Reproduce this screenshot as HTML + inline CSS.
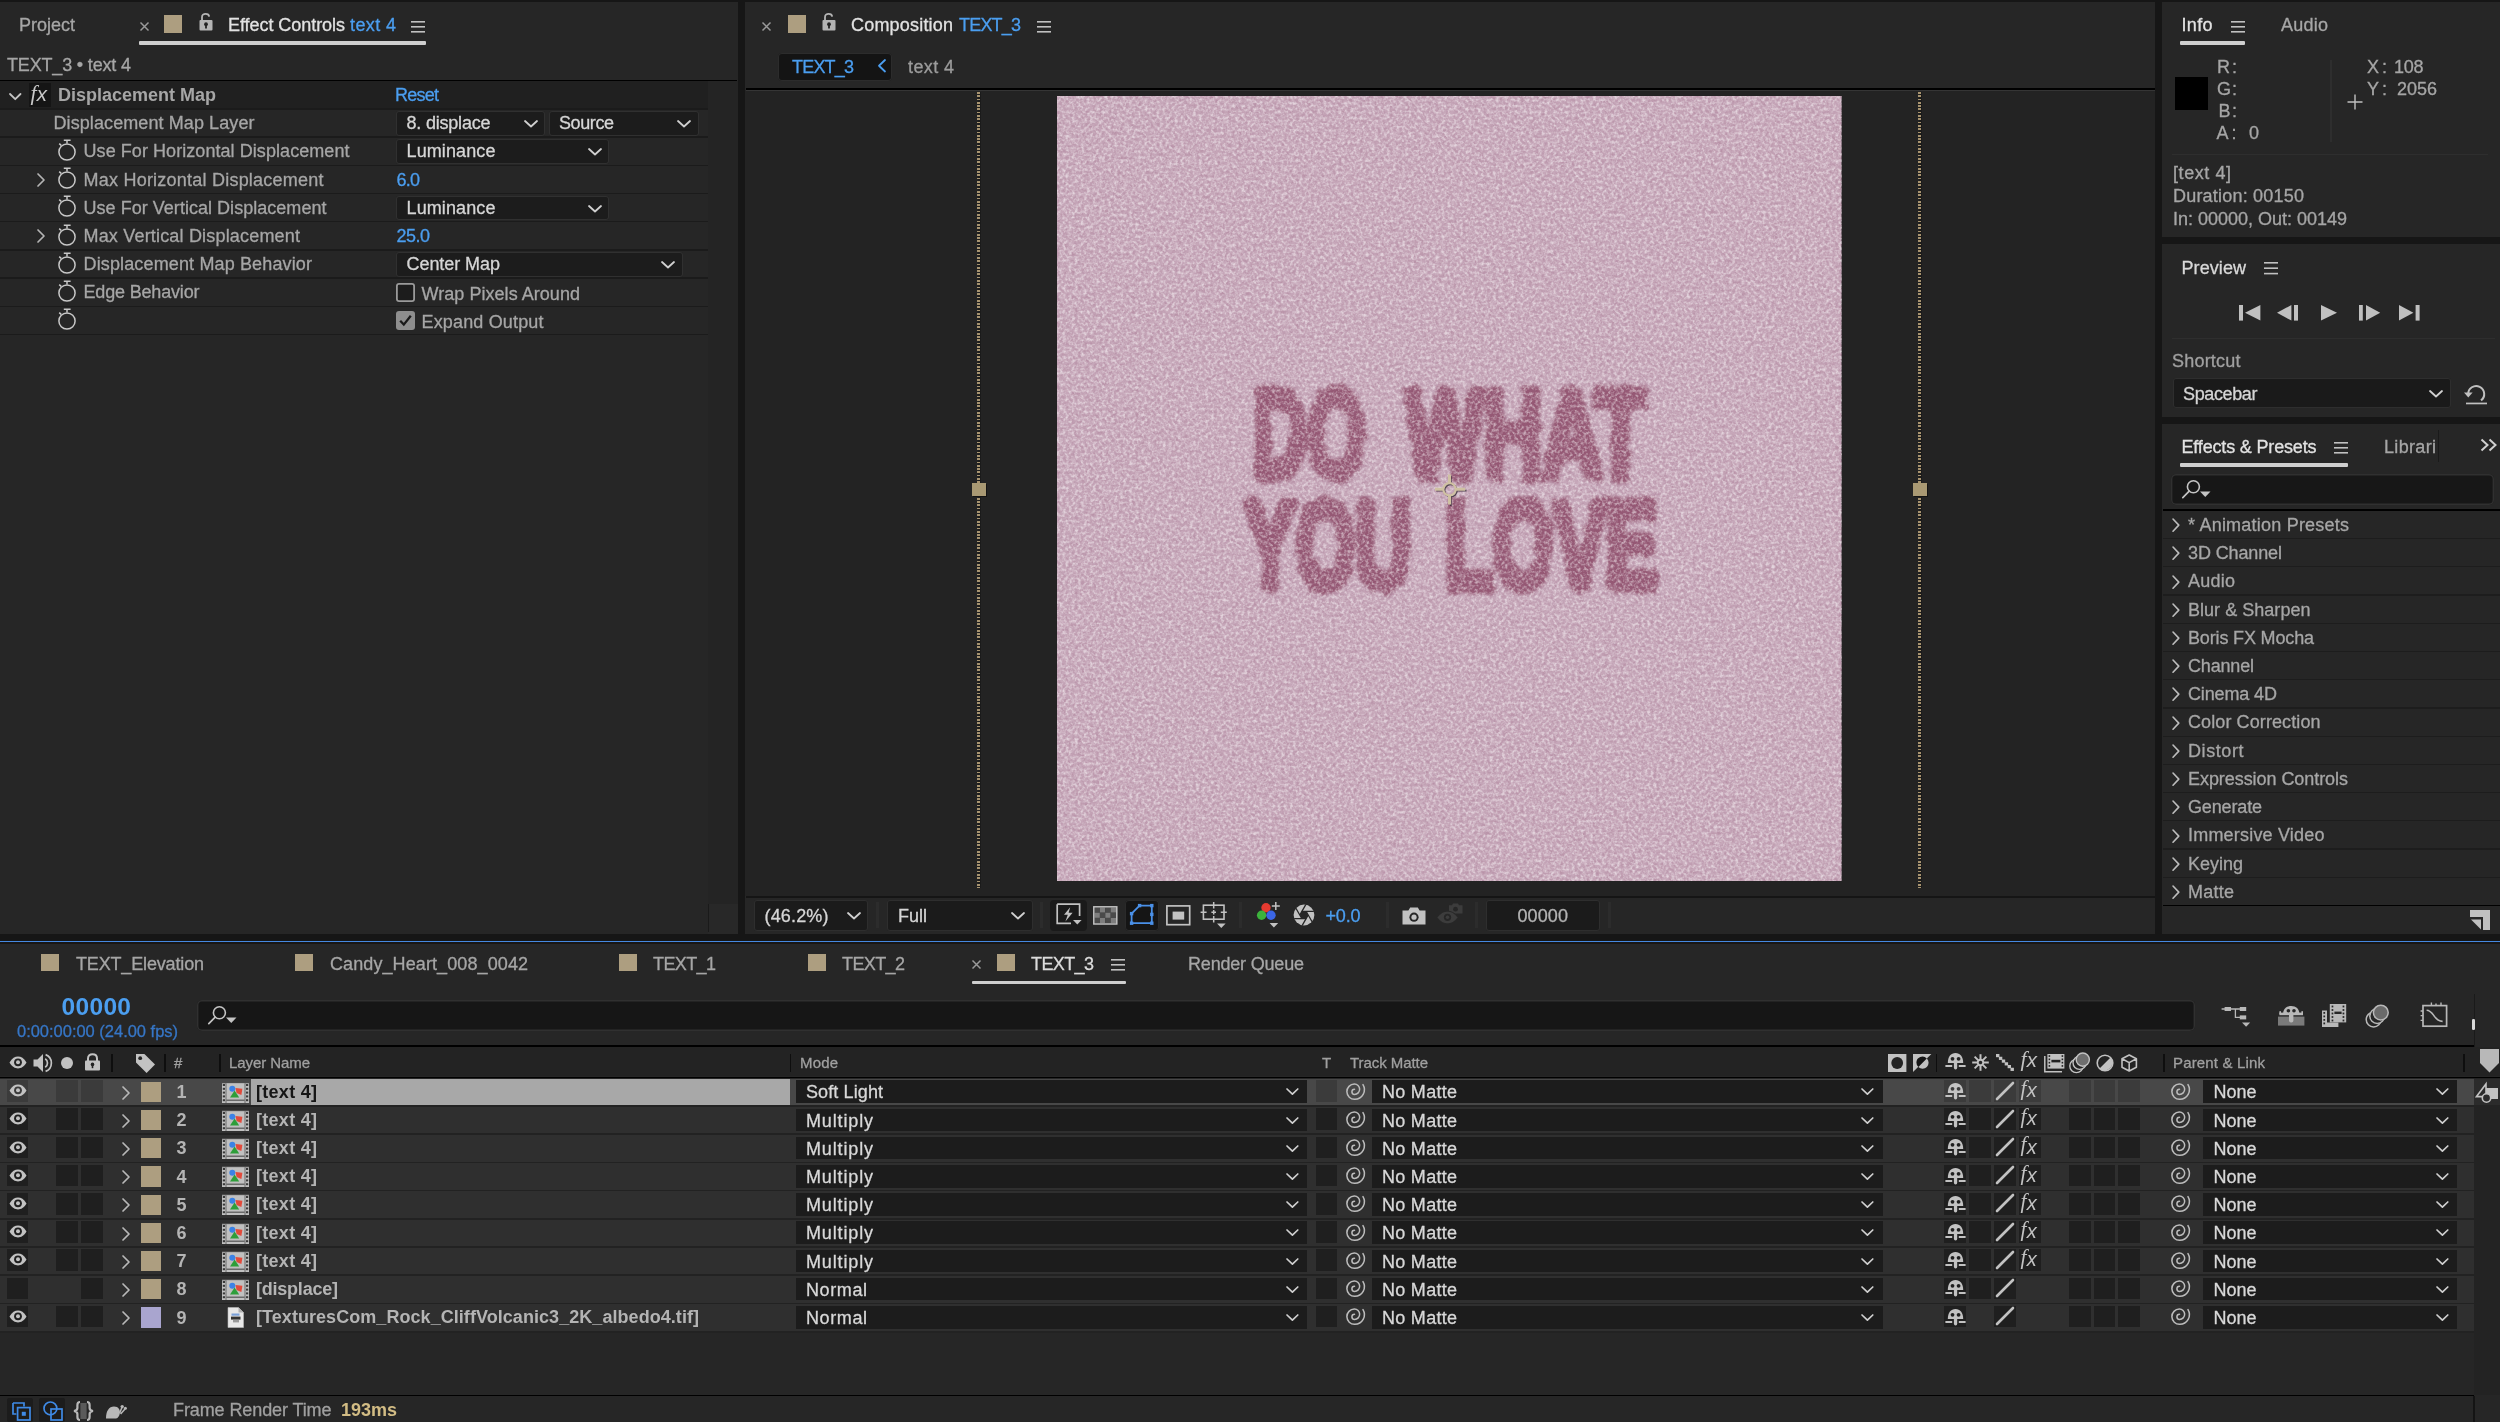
<!DOCTYPE html>
<html><head><meta charset="utf-8"><title>After Effects</title><style>html,body{margin:0;padding:0;background:#161616;}
body{width:2500px;height:1422px;position:relative;overflow:hidden;font-family:"Liberation Sans",sans-serif;}
#r{will-change:transform;position:absolute;left:0;top:0;width:2500px;height:1422px;overflow:hidden;background:#161616;}
#r>div,#r>span,#r>svg{position:absolute;display:block;}
#r>span{white-space:pre;}
svg{overflow:visible;}
</style></head><body><div id="r">
<div style="left:0px;top:1.5px;width:738.2px;height:932.2px;background:#262626;"></div>
<span style="left:19px;top:16.36px;font-size:18px;line-height:18px;color:#a6a6a6;letter-spacing:-0.004px;-webkit-text-stroke:0.3px;">Project</span>
<svg style="left:139.5px;top:21.5px;" width="9" height="9" viewBox="0 0 9 9"><path d="M0.5 0.5L8.5 8.5M8.5 0.5L0.5 8.5" stroke="#9a9a9a" stroke-width="1.5" fill="none"/></svg>
<div style="left:164px;top:15px;width:17.5px;height:17.5px;background:#ad9e80;"></div>
<svg style="left:198.5px;top:12.5px;" width="14" height="18" viewBox="0 0 14 18"><path d="M3 7.5V4.2C3 2 4.6 0.9 6.6 0.9C8.6 0.9 10 2 10.2 3.6" stroke="#b4b4b4" stroke-width="1.8" fill="none"/><rect x="0.5" y="7" width="13" height="10.5" rx="1" fill="#b4b4b4"/><circle cx="7" cy="11.2" r="1.9" fill="#232323"/><rect x="6.1" y="11.5" width="1.8" height="4" fill="#232323"/></svg>
<span style="left:228px;top:16.36px;font-size:18px;line-height:18px;color:#e2e2e2;letter-spacing:-0.052px;-webkit-text-stroke:0.3px;">Effect Controls</span>
<span style="left:350px;top:16.36px;font-size:18px;line-height:18px;color:#4b9ef0;letter-spacing:0.395px;-webkit-text-stroke:0.3px;">text 4</span>
<svg style="left:411px;top:20.5px;" width="14" height="12" viewBox="0 0 14 12"><rect x="0" y="0" width="14" height="1.6" fill="#c0c0c0"/><rect x="0" y="5" width="14" height="1.6" fill="#c0c0c0"/><rect x="0" y="10" width="14" height="1.6" fill="#c0c0c0"/></svg>
<div style="left:139px;top:41.3px;width:286.5px;height:3.6px;background:#cfcfcf;border-radius:1px;"></div>
<span style="left:7px;top:56.36px;font-size:18px;line-height:18px;color:#a6a6a6;letter-spacing:-0.168px;-webkit-text-stroke:0.3px;">TEXT_3 • text 4</span>
<div style="left:0px;top:79.8px;width:737px;height:1.5px;background:#000;"></div>
<div style="left:708px;top:81.3px;width:30.2px;height:852.4px;background:#242424;"></div>
<div style="left:708px;top:904.2px;width:30.2px;height:29.5px;background:#282828;"></div>
<div style="left:708px;top:904.2px;width:1.4px;height:28px;background:#1a1a1a;"></div>
<div style="left:0px;top:81.3px;width:708px;height:27px;background:#202020;"></div>
<div style="left:0px;top:108.2px;width:708px;height:1.4px;background:#1b1b1b;"></div>
<div style="left:0px;top:136.4px;width:708px;height:1.4px;background:#1b1b1b;"></div>
<div style="left:0px;top:164.6px;width:708px;height:1.4px;background:#1b1b1b;"></div>
<div style="left:0px;top:192.8px;width:708px;height:1.4px;background:#1b1b1b;"></div>
<div style="left:0px;top:221px;width:708px;height:1.4px;background:#1b1b1b;"></div>
<div style="left:0px;top:249.2px;width:708px;height:1.4px;background:#1b1b1b;"></div>
<div style="left:0px;top:277.4px;width:708px;height:1.4px;background:#1b1b1b;"></div>
<div style="left:0px;top:305.6px;width:708px;height:1.4px;background:#1b1b1b;"></div>
<div style="left:0px;top:333.8px;width:708px;height:1.4px;background:#1b1b1b;"></div>
<svg style="left:9.35px;top:92.6px;" width="12.5" height="7.2" viewBox="0 0 12.5 7.2"><path d="M1 1L6.25 6.2L11.5 1" stroke="#c4c4c4" stroke-width="1.8" fill="none" stroke-linecap="round" stroke-linejoin="round"/></svg>
<div style="left:28.5px;top:83px;width:22.5px;height:23.5px;background:#151515;"></div>
<span style="left:30.5px;top:81.88px;font-size:22px;line-height:22px;color:#c8c8c8;font-style:italic;font-family:'Liberation Serif',serif;">f</span>
<span style="left:36.7px;top:84.18px;font-size:20.5px;line-height:20.5px;color:#c8c8c8;font-style:italic;">x</span>
<span style="left:58px;top:85.96px;font-size:18px;line-height:18px;color:#a6a6a6;letter-spacing:-0.003px;font-weight:700;">Displacement Map</span>
<span style="left:395px;top:85.96px;font-size:18px;line-height:18px;color:#4b9ef0;letter-spacing:-0.756px;-webkit-text-stroke:0.3px;">Reset</span>
<span style="left:53.5px;top:114.26px;font-size:18px;line-height:18px;color:#a6a6a6;letter-spacing:0.091px;-webkit-text-stroke:0.3px;">Displacement Map Layer</span>
<div style="left:396px;top:111px;width:149px;height:24.5px;background:#1c1c1c;border-radius:3px;box-shadow:inset 0 0 0 1px #303030;"></div>
<span style="left:406.5px;top:114.26px;font-size:18px;line-height:18px;color:#d6d6d6;letter-spacing:-0.206px;-webkit-text-stroke:0.3px;">8. displace</span>
<svg style="left:524px;top:120px;" width="14" height="7.5" viewBox="0 0 14 7.5"><path d="M1 1L7 6.5L13 1" stroke="#d0d0d0" stroke-width="1.8" fill="none" stroke-linecap="round" stroke-linejoin="round"/></svg>
<div style="left:549px;top:111px;width:150px;height:24.5px;background:#1c1c1c;border-radius:3px;box-shadow:inset 0 0 0 1px #303030;"></div>
<span style="left:559px;top:114.26px;font-size:18px;line-height:18px;color:#d6d6d6;letter-spacing:-0.407px;-webkit-text-stroke:0.3px;">Source</span>
<svg style="left:677px;top:120px;" width="14" height="7.5" viewBox="0 0 14 7.5"><path d="M1 1L7 6.5L13 1" stroke="#d0d0d0" stroke-width="1.8" fill="none" stroke-linecap="round" stroke-linejoin="round"/></svg>
<svg style="left:57px;top:139px;" width="20" height="23" viewBox="0 0 20 23"><circle cx="10" cy="13" r="8.1" stroke="#c8c8c8" stroke-width="1.5" fill="none"/><path d="M6.8 1.2H13.6M10 1.2V4.6M2.2 4.6L4.2 6.4" stroke="#c8c8c8" stroke-width="1.5" fill="none"/></svg>
<span style="left:83.5px;top:142.46px;font-size:18px;line-height:18px;color:#a6a6a6;letter-spacing:0.063px;-webkit-text-stroke:0.3px;">Use For Horizontal Displacement</span>
<svg style="left:57px;top:167.2px;" width="20" height="23" viewBox="0 0 20 23"><circle cx="10" cy="13" r="8.1" stroke="#c8c8c8" stroke-width="1.5" fill="none"/><path d="M6.8 1.2H13.6M10 1.2V4.6M2.2 4.6L4.2 6.4" stroke="#c8c8c8" stroke-width="1.5" fill="none"/></svg>
<span style="left:83.5px;top:170.66px;font-size:18px;line-height:18px;color:#a6a6a6;letter-spacing:0.227px;-webkit-text-stroke:0.3px;">Max Horizontal Displacement</span>
<svg style="left:37px;top:172.8px;" width="8" height="14" viewBox="0 0 8 14"><path d="M1 1L7 7L1 13" stroke="#b4b4b4" stroke-width="1.7" fill="none" stroke-linecap="round" stroke-linejoin="round"/></svg>
<svg style="left:57px;top:195.4px;" width="20" height="23" viewBox="0 0 20 23"><circle cx="10" cy="13" r="8.1" stroke="#c8c8c8" stroke-width="1.5" fill="none"/><path d="M6.8 1.2H13.6M10 1.2V4.6M2.2 4.6L4.2 6.4" stroke="#c8c8c8" stroke-width="1.5" fill="none"/></svg>
<span style="left:83.5px;top:198.86px;font-size:18px;line-height:18px;color:#a6a6a6;letter-spacing:0.032px;-webkit-text-stroke:0.3px;">Use For Vertical Displacement</span>
<svg style="left:57px;top:223.6px;" width="20" height="23" viewBox="0 0 20 23"><circle cx="10" cy="13" r="8.1" stroke="#c8c8c8" stroke-width="1.5" fill="none"/><path d="M6.8 1.2H13.6M10 1.2V4.6M2.2 4.6L4.2 6.4" stroke="#c8c8c8" stroke-width="1.5" fill="none"/></svg>
<span style="left:83.5px;top:227.06px;font-size:18px;line-height:18px;color:#a6a6a6;letter-spacing:0.184px;-webkit-text-stroke:0.3px;">Max Vertical Displacement</span>
<svg style="left:37px;top:229.2px;" width="8" height="14" viewBox="0 0 8 14"><path d="M1 1L7 7L1 13" stroke="#b4b4b4" stroke-width="1.7" fill="none" stroke-linecap="round" stroke-linejoin="round"/></svg>
<svg style="left:57px;top:251.8px;" width="20" height="23" viewBox="0 0 20 23"><circle cx="10" cy="13" r="8.1" stroke="#c8c8c8" stroke-width="1.5" fill="none"/><path d="M6.8 1.2H13.6M10 1.2V4.6M2.2 4.6L4.2 6.4" stroke="#c8c8c8" stroke-width="1.5" fill="none"/></svg>
<span style="left:83.5px;top:255.26px;font-size:18px;line-height:18px;color:#a6a6a6;letter-spacing:0.141px;-webkit-text-stroke:0.3px;">Displacement Map Behavior</span>
<svg style="left:57px;top:280px;" width="20" height="23" viewBox="0 0 20 23"><circle cx="10" cy="13" r="8.1" stroke="#c8c8c8" stroke-width="1.5" fill="none"/><path d="M6.8 1.2H13.6M10 1.2V4.6M2.2 4.6L4.2 6.4" stroke="#c8c8c8" stroke-width="1.5" fill="none"/></svg>
<span style="left:83.5px;top:283.46px;font-size:18px;line-height:18px;color:#a6a6a6;letter-spacing:-0.174px;-webkit-text-stroke:0.3px;">Edge Behavior</span>
<svg style="left:57px;top:308.2px;" width="20" height="23" viewBox="0 0 20 23"><circle cx="10" cy="13" r="8.1" stroke="#c8c8c8" stroke-width="1.5" fill="none"/><path d="M6.8 1.2H13.6M10 1.2V4.6M2.2 4.6L4.2 6.4" stroke="#c8c8c8" stroke-width="1.5" fill="none"/></svg>
<div style="left:396px;top:139.2px;width:213px;height:24.5px;background:#1c1c1c;border-radius:3px;box-shadow:inset 0 0 0 1px #303030;"></div>
<span style="left:406.5px;top:142.46px;font-size:18px;line-height:18px;color:#d6d6d6;letter-spacing:0.117px;-webkit-text-stroke:0.3px;">Luminance</span>
<svg style="left:587.5px;top:148.2px;" width="14" height="7.5" viewBox="0 0 14 7.5"><path d="M1 1L7 6.5L13 1" stroke="#d0d0d0" stroke-width="1.8" fill="none" stroke-linecap="round" stroke-linejoin="round"/></svg>
<span style="left:396.5px;top:170.66px;font-size:18px;line-height:18px;color:#4b9ef0;letter-spacing:-0.761px;-webkit-text-stroke:0.3px;">6.0</span>
<div style="left:396px;top:195.6px;width:213px;height:24.5px;background:#1c1c1c;border-radius:3px;box-shadow:inset 0 0 0 1px #303030;"></div>
<span style="left:406.5px;top:198.86px;font-size:18px;line-height:18px;color:#d6d6d6;letter-spacing:0.117px;-webkit-text-stroke:0.3px;">Luminance</span>
<svg style="left:587.5px;top:204.6px;" width="14" height="7.5" viewBox="0 0 14 7.5"><path d="M1 1L7 6.5L13 1" stroke="#d0d0d0" stroke-width="1.8" fill="none" stroke-linecap="round" stroke-linejoin="round"/></svg>
<span style="left:396.5px;top:227.06px;font-size:18px;line-height:18px;color:#4b9ef0;letter-spacing:-0.511px;-webkit-text-stroke:0.3px;">25.0</span>
<div style="left:396px;top:252px;width:286.5px;height:24.5px;background:#1c1c1c;border-radius:3px;box-shadow:inset 0 0 0 1px #303030;"></div>
<span style="left:406.5px;top:255.26px;font-size:18px;line-height:18px;color:#d6d6d6;letter-spacing:-0.061px;-webkit-text-stroke:0.3px;">Center Map</span>
<svg style="left:660.5px;top:261px;" width="14" height="7.5" viewBox="0 0 14 7.5"><path d="M1 1L7 6.5L13 1" stroke="#d0d0d0" stroke-width="1.8" fill="none" stroke-linecap="round" stroke-linejoin="round"/></svg>
<div style="left:395.5px;top:283.2px;width:19px;height:19px;background:#1c1c1c;border-radius:3px;box-shadow:inset 0 0 0 1.8px #9a9a9a;"></div>
<span style="left:421.5px;top:284.76px;font-size:18px;line-height:18px;color:#a6a6a6;letter-spacing:0.044px;-webkit-text-stroke:0.3px;">Wrap Pixels Around</span>
<div style="left:395.5px;top:311.4px;width:19px;height:19px;background:#8e8e8e;border-radius:3px;"></div>
<svg style="left:395.5px;top:311.4px;" width="19" height="19" viewBox="0 0 19 19"><path d="M4.2 9.8L7.8 13.6L14.8 4.8" stroke="#1a1a1a" stroke-width="2.3" fill="none"/></svg>
<span style="left:421.5px;top:312.96px;font-size:18px;line-height:18px;color:#a6a6a6;letter-spacing:0.159px;-webkit-text-stroke:0.3px;">Expand Output</span>
<div style="left:745px;top:1.5px;width:1410px;height:932.2px;background:#262626;"></div>
<svg style="left:762px;top:22px;" width="9" height="9" viewBox="0 0 9 9"><path d="M0.5 0.5L8.5 8.5M8.5 0.5L0.5 8.5" stroke="#9a9a9a" stroke-width="1.5" fill="none"/></svg>
<div style="left:788px;top:15px;width:17.5px;height:17.5px;background:#ad9e80;"></div>
<svg style="left:822px;top:12.5px;" width="14" height="18" viewBox="0 0 14 18"><path d="M3 7.5V4.2C3 2 4.6 0.9 6.6 0.9C8.6 0.9 10 2 10.2 3.6" stroke="#b4b4b4" stroke-width="1.8" fill="none"/><rect x="0.5" y="7" width="13" height="10.5" rx="1" fill="#b4b4b4"/><circle cx="7" cy="11.2" r="1.9" fill="#232323"/><rect x="6.1" y="11.5" width="1.8" height="4" fill="#232323"/></svg>
<span style="left:851px;top:16.36px;font-size:18px;line-height:18px;color:#e2e2e2;letter-spacing:0.195px;-webkit-text-stroke:0.3px;">Composition</span>
<span style="left:959px;top:16.36px;font-size:18px;line-height:18px;color:#4b9ef0;letter-spacing:-0.805px;-webkit-text-stroke:0.3px;">TEXT_3</span>
<svg style="left:1037px;top:20.5px;" width="14" height="12" viewBox="0 0 14 12"><rect x="0" y="0" width="14" height="1.6" fill="#c0c0c0"/><rect x="0" y="5" width="14" height="1.6" fill="#c0c0c0"/><rect x="0" y="10" width="14" height="1.6" fill="#c0c0c0"/></svg>
<div style="left:777.5px;top:52.5px;width:114px;height:28px;background:#141414;border-radius:4px;box-shadow:inset 0 0 0 1px #2c2c2c;"></div>
<span style="left:792px;top:57.76px;font-size:18px;line-height:18px;color:#4b9ef0;letter-spacing:-0.805px;-webkit-text-stroke:0.3px;">TEXT_3</span>
<svg style="left:877.5px;top:59.25px;" width="8" height="13.5" viewBox="0 0 8 13.5"><path d="M7 1L1 6.75L7 12.5" stroke="#4b9ef0" stroke-width="1.8" fill="none" stroke-linecap="round" stroke-linejoin="round"/></svg>
<span style="left:908px;top:57.76px;font-size:18px;line-height:18px;color:#9c9c9c;letter-spacing:0.395px;-webkit-text-stroke:0.3px;">text 4</span>
<div style="left:746px;top:88.2px;width:1409px;height:1.6px;background:#000;"></div>
<div style="left:746px;top:89.8px;width:1409px;height:1.2px;background:#353535;"></div>
<div style="left:745px;top:91px;width:1410px;height:805px;background:#232323;"></div>
<div style="left:977.9px;top:92px;width:3.4px;height:796px;background:#1b1b1b;"></div>
<div style="left:977px;top:92px;width:3.4px;height:796px;background:repeating-linear-gradient(180deg,#a89470 0,#a89470 1.7px,rgba(0,0,0,0) 1.7px,rgba(0,0,0,0) 3.3px);"></div>
<div style="left:972.5px;top:483.5px;width:14px;height:13.5px;background:#131313;"></div>
<div style="left:971.5px;top:482.5px;width:14px;height:13.5px;background:#a99973;"></div>
<div style="left:1918.9px;top:92px;width:3.4px;height:796px;background:#1b1b1b;"></div>
<div style="left:1918px;top:92px;width:3.4px;height:796px;background:repeating-linear-gradient(180deg,#a89470 0,#a89470 1.7px,rgba(0,0,0,0) 1.7px,rgba(0,0,0,0) 3.3px);"></div>
<div style="left:1913.5px;top:483.5px;width:14px;height:13.5px;background:#131313;"></div>
<div style="left:1912.5px;top:482.5px;width:14px;height:13.5px;background:#a99973;"></div>
<svg style="left:1057px;top:96px;" width="784.5" height="785" viewBox="0 0 784.5 785"><defs><filter id="nz" x="0" y="0" width="100%" height="100%" color-interpolation-filters="sRGB"><feTurbulence type="fractalNoise" baseFrequency="0.33" numOctaves="2" seed="7" result="t"/><feColorMatrix in="t" type="matrix" values="0 0 0 0 1  0 0 0 0 1  0 0 0 0 1  2.6 0 0 0 -1.05"/></filter><filter id="nz2" x="0" y="0" width="100%" height="100%" color-interpolation-filters="sRGB"><feTurbulence type="fractalNoise" baseFrequency="0.28" numOctaves="2" seed="3" result="t"/><feColorMatrix in="t" type="matrix" values="0 0 0 0 0.62  0 0 0 0 0.42  0 0 0 0 0.53  0 2.4 0 0 -0.95"/></filter><filter id="rough" x="-5%" y="-10%" width="110%" height="120%" color-interpolation-filters="sRGB"><feTurbulence type="fractalNoise" baseFrequency="0.11" numOctaves="2" seed="11" result="t"/><feDisplacementMap in="SourceGraphic" in2="t" scale="10" xChannelSelector="R" yChannelSelector="G" result="d"/><feGaussianBlur in="d" stdDeviation="1.8"/></filter></defs><rect width="784.5" height="785" fill="#c6a7b9"/><g filter="url(#rough)" fill="#90506c" stroke="#90506c" stroke-width="9" stroke-linejoin="round" opacity="0.9" font-family="'Liberation Sans',sans-serif" font-weight="700" font-size="125"><g transform="translate(196,381) scale(0.60,1)"><text x="0" y="0" style="vector-effect:non-scaling-stroke">DO</text></g><g transform="translate(349,381) scale(0.654,1)"><text x="0" y="0" style="vector-effect:non-scaling-stroke">WHAT</text></g><g transform="translate(187,492) scale(0.618,1)"><text x="0" y="0" style="vector-effect:non-scaling-stroke">YOU</text></g><g transform="translate(388,492) scale(0.626,1)"><text x="0" y="0" style="vector-effect:non-scaling-stroke">LOVE</text></g></g><rect width="784.5" height="785" filter="url(#nz2)" opacity="0.32"/><rect width="784.5" height="785" filter="url(#nz)" opacity="0.5"/><g fill="none" stroke-linecap="butt"><g stroke="#2c2430" opacity="0.75" transform="translate(1.3,1.3)"><circle cx="392.5" cy="393.3" r="6.2" stroke-width="1.6"/><path d="M392.5 378.5V387M392.5 399.6V408.6M378 393.3H386.2M398.8 393.3H408.2" stroke-width="1.8"/></g><g stroke="#cfc1a2"><circle cx="392.5" cy="393.3" r="6.2" stroke-width="2.2"/><path d="M392.5 378.5V387.2M392.5 399.4V408.6M378 393.3H386.4M398.6 393.3H408.2" stroke-width="3"/></g></g></svg>
<div style="left:746px;top:896.1px;width:1409px;height:1.5px;background:#151515;"></div>
<div style="left:745px;top:897.6px;width:1410px;height:36.1px;background:#262626;"></div>
<div style="left:754px;top:900px;width:114px;height:30.5px;background:#1b1b1b;border-radius:3px;box-shadow:inset 0 0 0 1px #2e2e2e;"></div>
<span style="left:764.5px;top:906.56px;font-size:18px;line-height:18px;color:#d6d6d6;letter-spacing:0.162px;-webkit-text-stroke:0.3px;">(46.2%)</span>
<svg style="left:846.5px;top:912px;" width="14" height="7.5" viewBox="0 0 14 7.5"><path d="M1 1L7 6.5L13 1" stroke="#d0d0d0" stroke-width="1.8" fill="none" stroke-linecap="round" stroke-linejoin="round"/></svg>
<div style="left:876px;top:902px;width:2.5px;height:26px;background:#2c2c2c;"></div>
<div style="left:887px;top:900px;width:145.5px;height:30.5px;background:#1b1b1b;border-radius:3px;box-shadow:inset 0 0 0 1px #2e2e2e;"></div>
<span style="left:898px;top:906.56px;font-size:18px;line-height:18px;color:#d6d6d6;letter-spacing:-0.002px;-webkit-text-stroke:0.3px;">Full</span>
<svg style="left:1010.5px;top:912px;" width="14" height="7.5" viewBox="0 0 14 7.5"><path d="M1 1L7 6.5L13 1" stroke="#d0d0d0" stroke-width="1.8" fill="none" stroke-linecap="round" stroke-linejoin="round"/></svg>
<div style="left:1040px;top:902px;width:2.5px;height:26px;background:#2c2c2c;"></div>
<div style="left:1050px;top:899.5px;width:36.5px;height:31px;background:#1a1a1a;border-radius:4px;"></div>
<svg style="left:1056px;top:903px;" width="26" height="23" viewBox="0 0 26 23"><path d="M1.2 1.2H23.6V13M15 20.4H1.2V1.2" stroke="#c2c2c2" stroke-width="1.7" fill="none"/><path d="M14.2 4.2L8 11.8H11.8L9.4 18.4L16.6 9.8H12.6Z" fill="#c2c2c2"/><path d="M17 17H25.6L21.3 21.6Z" fill="#c2c2c2"/></svg>
<svg style="left:1093px;top:905.5px;" width="24.6" height="18.8" viewBox="0 0 24.6 18.8"><rect x="1.5" y="1.5" width="5.4" height="5.2" fill="#4a4a4a"/><rect x="6.9" y="1.5" width="5.4" height="5.2" fill="#7e7e7e"/><rect x="12.3" y="1.5" width="5.4" height="5.2" fill="#4a4a4a"/><rect x="17.7" y="1.5" width="5.4" height="5.2" fill="#7e7e7e"/><rect x="1.5" y="6.7" width="5.4" height="5.2" fill="#7e7e7e"/><rect x="6.9" y="6.7" width="5.4" height="5.2" fill="#4a4a4a"/><rect x="12.3" y="6.7" width="5.4" height="5.2" fill="#7e7e7e"/><rect x="17.7" y="6.7" width="5.4" height="5.2" fill="#4a4a4a"/><rect x="1.5" y="11.9" width="5.4" height="5.2" fill="#4a4a4a"/><rect x="6.9" y="11.9" width="5.4" height="5.2" fill="#7e7e7e"/><rect x="12.3" y="11.9" width="5.4" height="5.2" fill="#4a4a4a"/><rect x="17.7" y="11.9" width="5.4" height="5.2" fill="#7e7e7e"/><rect x="0.8" y="0.8" width="23" height="17.2" stroke="#c2c2c2" stroke-width="1.5" fill="none"/></svg>
<div style="left:1124.5px;top:899.5px;width:34px;height:31px;background:#151515;border-radius:4px;box-shadow:inset 0 0 0 1px #2a2a2a;"></div>
<svg style="left:1129px;top:903px;" width="26" height="23" viewBox="0 0 26 23"><path d="M2.6 20.2V10.6L10.6 2.6H22.8V20.2Z" stroke="#4a90e8" stroke-width="1.8" fill="none"/><rect x="0.9" y="18.5" width="3.4" height="3.4" fill="#4a90e8"/><rect x="0.9" y="8.9" width="3.4" height="3.4" fill="#4a90e8"/><rect x="8.9" y="0.9" width="3.4" height="3.4" fill="#4a90e8"/><rect x="21.1" y="0.9" width="3.4" height="3.4" fill="#4a90e8"/><rect x="21.1" y="18.5" width="3.4" height="3.4" fill="#4a90e8"/><rect x="21.1" y="9.7" width="3.4" height="3.4" fill="#4a90e8"/></svg>
<svg style="left:1166px;top:904.5px;" width="24.6" height="20.6" viewBox="0 0 24.6 20.6"><rect x="0.9" y="0.9" width="22.8" height="18.8" stroke="#c2c2c2" stroke-width="1.7" fill="none"/><rect x="6.6" y="6.6" width="11.6" height="8" fill="#c2c2c2"/></svg>
<svg style="left:1200px;top:902px;" width="28" height="27" viewBox="0 0 28 27"><rect x="3.4" y="3.2" width="20.6" height="14" stroke="#c2c2c2" stroke-width="1.6" fill="none"/><path d="M13.7 0V6.4M13.7 14V20.6M0.6 10.2H6.6M20.8 10.2H26.8M11.4 10.2H16M13.7 8V12.4" stroke="#c2c2c2" stroke-width="1.5" fill="none"/><path d="M17 21.4H25.6L21.3 26Z" fill="#c2c2c2"/></svg>
<div style="left:1239px;top:902px;width:2.5px;height:26px;background:#2c2c2c;"></div>
<svg style="left:1256px;top:901px;" width="26" height="28" viewBox="0 0 26 28"><circle cx="10" cy="6.8" r="4.7" fill="#e63a30"/><circle cx="5.6" cy="14.2" r="4.7" fill="#3cb23c"/><circle cx="15" cy="14.2" r="4.7" fill="#3b66e6"/><path d="M19.8 1V9M15.8 5H23.8" stroke="#c2c2c2" stroke-width="1.5" fill="none"/><path d="M13.6 22H22.2L17.9 26.6Z" fill="#c2c2c2"/></svg>
<svg style="left:1293px;top:903.5px;" width="22" height="22" viewBox="0 0 22 22"><g transform="translate(11,11)"><circle r="10.4" fill="#c2c2c2"/><path d="M2.1 -3.64L4.2 0L8.07 6.71" stroke="#262626" stroke-width="1.3" fill="none" transform="rotate(0)"/><path d="M2.1 -3.64L4.2 0L8.07 6.71" stroke="#262626" stroke-width="1.3" fill="none" transform="rotate(60)"/><path d="M2.1 -3.64L4.2 0L8.07 6.71" stroke="#262626" stroke-width="1.3" fill="none" transform="rotate(120)"/><path d="M2.1 -3.64L4.2 0L8.07 6.71" stroke="#262626" stroke-width="1.3" fill="none" transform="rotate(180)"/><path d="M2.1 -3.64L4.2 0L8.07 6.71" stroke="#262626" stroke-width="1.3" fill="none" transform="rotate(240)"/><path d="M2.1 -3.64L4.2 0L8.07 6.71" stroke="#262626" stroke-width="1.3" fill="none" transform="rotate(300)"/><polygon points="4.20,0.00 2.10,3.64 -2.10,3.64 -4.20,0.00 -2.10,-3.64 2.10,-3.64" fill="#262626"/></g></svg>
<span style="left:1325.5px;top:906.76px;font-size:18px;line-height:18px;color:#4b9ef0;letter-spacing:-0.178px;-webkit-text-stroke:0.3px;">+0.0</span>
<div style="left:1386px;top:902px;width:2.5px;height:26px;background:#2c2c2c;"></div>
<svg style="left:1401.5px;top:906.5px;" width="24" height="18" viewBox="0 0 24 18"><path d="M0.5 3.4H6.4L8.2 0.5H15.8L17.6 3.4H23.5V17.5H0.5Z" fill="#c2c2c2"/><circle cx="12" cy="10.2" r="4.6" fill="#262626"/><circle cx="12" cy="10.2" r="2.6" fill="#c2c2c2"/></svg>
<svg style="left:1436px;top:902px;" width="28" height="24" viewBox="0 0 28 24"><path d="M13 3.2H16L17 1.4H22L23 3.2H26.5V11.5H13Z" fill="#3c3c3c"/><circle cx="19.5" cy="7.2" r="2.4" fill="#262626"/><path d="M1 15.5C4.6 10.6 8 9.2 11.5 9.2C15 9.2 18.4 10.6 22 15.5C18.4 20.4 15 21.8 11.5 21.8C8 21.8 4.6 20.4 1 15.5Z" fill="#3c3c3c" stroke="#262626" stroke-width="1"/><circle cx="11.5" cy="15.3" r="3.6" fill="#262626"/><circle cx="11.5" cy="15.3" r="1.8" fill="#3c3c3c"/></svg>
<div style="left:1475px;top:902px;width:2.5px;height:26px;background:#2c2c2c;"></div>
<div style="left:1486px;top:900px;width:114px;height:30.5px;background:#1b1b1b;border-radius:3px;box-shadow:inset 0 0 0 1px #2e2e2e;"></div>
<span style="left:1517.5px;top:906.56px;font-size:18px;line-height:18px;color:#b4b4b4;letter-spacing:0.111px;-webkit-text-stroke:0.3px;">00000</span>
<div style="left:1608px;top:902px;width:2.5px;height:26px;background:#2c2c2c;"></div>
<div style="left:2161.7px;top:1.5px;width:338.3px;height:235.5px;background:#262626;"></div>
<span style="left:2181.5px;top:16.36px;font-size:18px;line-height:18px;color:#e2e2e2;letter-spacing:0.326px;-webkit-text-stroke:0.3px;">Info</span>
<svg style="left:2231px;top:20.5px;" width="14" height="12" viewBox="0 0 14 12"><rect x="0" y="0" width="14" height="1.6" fill="#c0c0c0"/><rect x="0" y="5" width="14" height="1.6" fill="#c0c0c0"/><rect x="0" y="10" width="14" height="1.6" fill="#c0c0c0"/></svg>
<div style="left:2180px;top:41.3px;width:65px;height:3.6px;background:#cfcfcf;border-radius:1px;"></div>
<span style="left:2281px;top:16.36px;font-size:18px;line-height:18px;color:#a6a6a6;letter-spacing:0.240px;-webkit-text-stroke:0.3px;">Audio</span>
<div style="left:2175px;top:76.8px;width:33px;height:33px;background:#000;"></div>
<span style="left:2217px;top:58.16px;font-size:18px;line-height:18px;color:#a6a6a6;letter-spacing:-1.500px;-webkit-text-stroke:0.3px;">R :</span>
<span style="left:2217px;top:80.16px;font-size:18px;line-height:18px;color:#a6a6a6;letter-spacing:-2.001px;-webkit-text-stroke:0.3px;">G :</span>
<span style="left:2218.5px;top:102.16px;font-size:18px;line-height:18px;color:#a6a6a6;letter-spacing:-1.754px;-webkit-text-stroke:0.3px;">B :</span>
<span style="left:2216.5px;top:124.36px;font-size:18px;line-height:18px;color:#a6a6a6;letter-spacing:-0.508px;-webkit-text-stroke:0.3px;">A :</span>
<span style="left:2249px;top:124.36px;font-size:18px;line-height:18px;color:#a6a6a6;-webkit-text-stroke:0.3px;">0</span>
<div style="left:2330.3px;top:60px;width:1.4px;height:82px;background:#2e2e2e;"></div>
<span style="left:2367px;top:58.16px;font-size:18px;line-height:18px;color:#a6a6a6;letter-spacing:-1.004px;-webkit-text-stroke:0.3px;">X :</span>
<span style="left:2394px;top:58.16px;font-size:18px;line-height:18px;color:#a6a6a6;letter-spacing:-0.267px;-webkit-text-stroke:0.3px;">108</span>
<span style="left:2367px;top:80.16px;font-size:18px;line-height:18px;color:#a6a6a6;letter-spacing:-0.841px;-webkit-text-stroke:0.3px;">Y :</span>
<span style="left:2397px;top:80.16px;font-size:18px;line-height:18px;color:#a6a6a6;letter-spacing:-0.015px;-webkit-text-stroke:0.3px;">2056</span>
<svg style="left:2346.5px;top:94px;" width="16" height="16" viewBox="0 0 16 16"><path d="M8 0.5V15.5M0.5 8H15.5" stroke="#c0c0c0" stroke-width="1.4" fill="none"/></svg>
<div style="left:2172px;top:153.6px;width:316px;height:1.4px;background:#2e2e2e;"></div>
<span style="left:2173px;top:163.76px;font-size:18px;line-height:18px;color:#a6a6a6;letter-spacing:0.568px;-webkit-text-stroke:0.3px;">[text 4]</span>
<span style="left:2173px;top:187.06px;font-size:18px;line-height:18px;color:#a6a6a6;letter-spacing:0.207px;-webkit-text-stroke:0.3px;">Duration: 00150</span>
<span style="left:2173px;top:210.36px;font-size:18px;line-height:18px;color:#a6a6a6;letter-spacing:-0.007px;-webkit-text-stroke:0.3px;">In: 00000, Out: 00149</span>
<div style="left:2161.7px;top:244px;width:338.3px;height:172.5px;background:#262626;"></div>
<span style="left:2181.5px;top:258.96px;font-size:18px;line-height:18px;color:#d8d8d8;letter-spacing:0.080px;-webkit-text-stroke:0.3px;">Preview</span>
<svg style="left:2264px;top:262px;" width="14" height="12.8" viewBox="0 0 14 12.8"><rect x="0" y="0" width="14" height="1.6" fill="#c0c0c0"/><rect x="0" y="5.4" width="14" height="1.6" fill="#c0c0c0"/><rect x="0" y="10.8" width="14" height="1.6" fill="#c0c0c0"/></svg>
<svg style="left:2239px;top:305px;" width="22" height="16" viewBox="0 0 22 16"><rect x="0" y="0" width="4" height="15.6" fill="#c0c0c0"/><path d="M21.4 0V15.6L6 7.8Z" fill="#c0c0c0"/></svg>
<svg style="left:2277px;top:305px;" width="22" height="16" viewBox="0 0 22 16"><path d="M14.4 0V15.6L0 7.8Z" fill="#c0c0c0"/><rect x="17" y="0" width="4" height="15.6" fill="#c0c0c0"/></svg>
<svg style="left:2320.5px;top:305px;" width="17" height="16" viewBox="0 0 17 16"><path d="M0 0L16 7.8L0 15.6Z" fill="#c0c0c0"/></svg>
<svg style="left:2358.5px;top:305px;" width="22" height="16" viewBox="0 0 22 16"><rect x="0" y="0" width="3.8" height="15.6" fill="#c0c0c0"/><path d="M7 0L21.2 7.8L7 15.6Z" fill="#c0c0c0"/></svg>
<svg style="left:2398.5px;top:305px;" width="22" height="16" viewBox="0 0 22 16"><path d="M0 0L14.4 7.8L0 15.6Z" fill="#c0c0c0"/><rect x="16.6" y="0" width="4" height="15.6" fill="#c0c0c0"/></svg>
<div style="left:2172px;top:338px;width:323px;height:1.4px;background:#2e2e2e;"></div>
<span style="left:2172px;top:351.76px;font-size:18px;line-height:18px;color:#a0a0a0;letter-spacing:0.209px;-webkit-text-stroke:0.3px;">Shortcut</span>
<div style="left:2172.5px;top:377.8px;width:278px;height:30.6px;background:#1a1a1a;border-radius:3px;box-shadow:inset 0 0 0 1px #2e2e2e;"></div>
<span style="left:2183px;top:385.06px;font-size:18px;line-height:18px;color:#d6d6d6;letter-spacing:-0.365px;-webkit-text-stroke:0.3px;">Spacebar</span>
<svg style="left:2429px;top:389.85px;" width="14" height="7.5" viewBox="0 0 14 7.5"><path d="M1 1L7 6.5L13 1" stroke="#d0d0d0" stroke-width="1.8" fill="none" stroke-linecap="round" stroke-linejoin="round"/></svg>
<svg style="left:2464px;top:383px;" width="25" height="22" viewBox="0 0 25 22"><path d="M4.2 11.2A8 8 0 1 1 17 17.4" stroke="#c0c0c0" stroke-width="2" fill="none"/><path d="M0 9.4H8.6L4.3 14.6Z" fill="#c0c0c0"/><rect x="2" y="19.6" width="21" height="1.7" fill="#c0c0c0"/></svg>
<div style="left:2161.7px;top:424px;width:338.3px;height:509.7px;background:#262626;"></div>
<span style="left:2181.5px;top:437.76px;font-size:18px;line-height:18px;color:#e2e2e2;letter-spacing:-0.170px;-webkit-text-stroke:0.3px;">Effects &amp; Presets</span>
<svg style="left:2334px;top:441.5px;" width="14" height="12" viewBox="0 0 14 12"><rect x="0" y="0" width="14" height="1.6" fill="#c0c0c0"/><rect x="0" y="5" width="14" height="1.6" fill="#c0c0c0"/><rect x="0" y="10" width="14" height="1.6" fill="#c0c0c0"/></svg>
<div style="left:2180px;top:463px;width:167.5px;height:3.6px;background:#cfcfcf;border-radius:1px;"></div>
<span style="left:2384px;top:437.76px;font-size:18px;line-height:18px;color:#a6a6a6;letter-spacing:0.330px;-webkit-text-stroke:0.3px;">Librari</span>
<div style="left:2437.5px;top:430px;width:1.5px;height:32px;background:#1a1a1a;"></div>
<svg style="left:2479.5px;top:438px;" width="18" height="14" viewBox="0 0 18 14"><path d="M1.5 1.5L7.5 7L1.5 12.5M9.5 1.5L15.5 7L9.5 12.5" stroke="#d0d0d0" stroke-width="2" fill="none"/></svg>
<div style="left:2170.7px;top:473.8px;width:323.6px;height:31px;background:#171717;border-radius:5px;box-shadow:inset 0 0 0 1.4px #303030;"></div>
<svg style="left:2181.5px;top:479.5px;" width="29" height="19" viewBox="0 0 29 19"><circle cx="11.4" cy="6.7" r="6" stroke="#c4c4c4" stroke-width="1.6" fill="none"/><path d="M7.2 11.2L0.8 17.6" stroke="#c4c4c4" stroke-width="1.7" fill="none" stroke-linecap="round"/><path d="M18 11.6H28.5L23.25 16.9Z" fill="#c4c4c4"/></svg>
<div style="left:2163.2px;top:509.2px;width:338.3px;height:1.5px;background:#000;"></div>
<div style="left:2163.2px;top:538px;width:338.3px;height:1.2px;background:#1d1d1d;"></div>
<svg style="left:2172px;top:518.1px;" width="7.8" height="14.2" viewBox="0 0 7.8 14.2"><path d="M1 1L6.8 7.1L1 13.2" stroke="#bcbcbc" stroke-width="1.6" fill="none" stroke-linecap="round" stroke-linejoin="round"/></svg>
<span style="left:2188px;top:515.86px;font-size:18px;line-height:18px;color:#a6a6a6;letter-spacing:0.218px;-webkit-text-stroke:0.3px;">* Animation Presets</span>
<div style="left:2163.2px;top:566.22px;width:338.3px;height:1.2px;background:#1d1d1d;"></div>
<svg style="left:2172px;top:546.32px;" width="7.8" height="14.2" viewBox="0 0 7.8 14.2"><path d="M1 1L6.8 7.1L1 13.2" stroke="#bcbcbc" stroke-width="1.6" fill="none" stroke-linecap="round" stroke-linejoin="round"/></svg>
<span style="left:2188px;top:544.08px;font-size:18px;line-height:18px;color:#a6a6a6;letter-spacing:-0.118px;-webkit-text-stroke:0.3px;">3D Channel</span>
<div style="left:2163.2px;top:594.44px;width:338.3px;height:1.2px;background:#1d1d1d;"></div>
<svg style="left:2172px;top:574.54px;" width="7.8" height="14.2" viewBox="0 0 7.8 14.2"><path d="M1 1L6.8 7.1L1 13.2" stroke="#bcbcbc" stroke-width="1.6" fill="none" stroke-linecap="round" stroke-linejoin="round"/></svg>
<span style="left:2188px;top:572.30px;font-size:18px;line-height:18px;color:#a6a6a6;letter-spacing:0.240px;-webkit-text-stroke:0.3px;">Audio</span>
<div style="left:2163.2px;top:622.66px;width:338.3px;height:1.2px;background:#1d1d1d;"></div>
<svg style="left:2172px;top:602.76px;" width="7.8" height="14.2" viewBox="0 0 7.8 14.2"><path d="M1 1L6.8 7.1L1 13.2" stroke="#bcbcbc" stroke-width="1.6" fill="none" stroke-linecap="round" stroke-linejoin="round"/></svg>
<span style="left:2188px;top:600.52px;font-size:18px;line-height:18px;color:#a6a6a6;letter-spacing:0.033px;-webkit-text-stroke:0.3px;">Blur &amp; Sharpen</span>
<div style="left:2163.2px;top:650.88px;width:338.3px;height:1.2px;background:#1d1d1d;"></div>
<svg style="left:2172px;top:630.98px;" width="7.8" height="14.2" viewBox="0 0 7.8 14.2"><path d="M1 1L6.8 7.1L1 13.2" stroke="#bcbcbc" stroke-width="1.6" fill="none" stroke-linecap="round" stroke-linejoin="round"/></svg>
<span style="left:2188px;top:628.74px;font-size:18px;line-height:18px;color:#a6a6a6;letter-spacing:-0.157px;-webkit-text-stroke:0.3px;">Boris FX Mocha</span>
<div style="left:2163.2px;top:679.1px;width:338.3px;height:1.2px;background:#1d1d1d;"></div>
<svg style="left:2172px;top:659.2px;" width="7.8" height="14.2" viewBox="0 0 7.8 14.2"><path d="M1 1L6.8 7.1L1 13.2" stroke="#bcbcbc" stroke-width="1.6" fill="none" stroke-linecap="round" stroke-linejoin="round"/></svg>
<span style="left:2188px;top:656.96px;font-size:18px;line-height:18px;color:#a6a6a6;letter-spacing:-0.176px;-webkit-text-stroke:0.3px;">Channel</span>
<div style="left:2163.2px;top:707.32px;width:338.3px;height:1.2px;background:#1d1d1d;"></div>
<svg style="left:2172px;top:687.42px;" width="7.8" height="14.2" viewBox="0 0 7.8 14.2"><path d="M1 1L6.8 7.1L1 13.2" stroke="#bcbcbc" stroke-width="1.6" fill="none" stroke-linecap="round" stroke-linejoin="round"/></svg>
<span style="left:2188px;top:685.18px;font-size:18px;line-height:18px;color:#a6a6a6;letter-spacing:-0.130px;-webkit-text-stroke:0.3px;">Cinema 4D</span>
<div style="left:2163.2px;top:735.54px;width:338.3px;height:1.2px;background:#1d1d1d;"></div>
<svg style="left:2172px;top:715.64px;" width="7.8" height="14.2" viewBox="0 0 7.8 14.2"><path d="M1 1L6.8 7.1L1 13.2" stroke="#bcbcbc" stroke-width="1.6" fill="none" stroke-linecap="round" stroke-linejoin="round"/></svg>
<span style="left:2188px;top:713.40px;font-size:18px;line-height:18px;color:#a6a6a6;letter-spacing:0.097px;-webkit-text-stroke:0.3px;">Color Correction</span>
<div style="left:2163.2px;top:763.76px;width:338.3px;height:1.2px;background:#1d1d1d;"></div>
<svg style="left:2172px;top:743.86px;" width="7.8" height="14.2" viewBox="0 0 7.8 14.2"><path d="M1 1L6.8 7.1L1 13.2" stroke="#bcbcbc" stroke-width="1.6" fill="none" stroke-linecap="round" stroke-linejoin="round"/></svg>
<span style="left:2188px;top:741.62px;font-size:18px;line-height:18px;color:#a6a6a6;letter-spacing:0.582px;-webkit-text-stroke:0.3px;">Distort</span>
<div style="left:2163.2px;top:791.98px;width:338.3px;height:1.2px;background:#1d1d1d;"></div>
<svg style="left:2172px;top:772.08px;" width="7.8" height="14.2" viewBox="0 0 7.8 14.2"><path d="M1 1L6.8 7.1L1 13.2" stroke="#bcbcbc" stroke-width="1.6" fill="none" stroke-linecap="round" stroke-linejoin="round"/></svg>
<span style="left:2188px;top:769.84px;font-size:18px;line-height:18px;color:#a6a6a6;letter-spacing:-0.060px;-webkit-text-stroke:0.3px;">Expression Controls</span>
<div style="left:2163.2px;top:820.2px;width:338.3px;height:1.2px;background:#1d1d1d;"></div>
<svg style="left:2172px;top:800.3px;" width="7.8" height="14.2" viewBox="0 0 7.8 14.2"><path d="M1 1L6.8 7.1L1 13.2" stroke="#bcbcbc" stroke-width="1.6" fill="none" stroke-linecap="round" stroke-linejoin="round"/></svg>
<span style="left:2188px;top:798.06px;font-size:18px;line-height:18px;color:#a6a6a6;letter-spacing:-0.150px;-webkit-text-stroke:0.3px;">Generate</span>
<div style="left:2163.2px;top:848.42px;width:338.3px;height:1.2px;background:#1d1d1d;"></div>
<svg style="left:2172px;top:828.52px;" width="7.8" height="14.2" viewBox="0 0 7.8 14.2"><path d="M1 1L6.8 7.1L1 13.2" stroke="#bcbcbc" stroke-width="1.6" fill="none" stroke-linecap="round" stroke-linejoin="round"/></svg>
<span style="left:2188px;top:826.28px;font-size:18px;line-height:18px;color:#a6a6a6;letter-spacing:0.198px;-webkit-text-stroke:0.3px;">Immersive Video</span>
<div style="left:2163.2px;top:876.64px;width:338.3px;height:1.2px;background:#1d1d1d;"></div>
<svg style="left:2172px;top:856.74px;" width="7.8" height="14.2" viewBox="0 0 7.8 14.2"><path d="M1 1L6.8 7.1L1 13.2" stroke="#bcbcbc" stroke-width="1.6" fill="none" stroke-linecap="round" stroke-linejoin="round"/></svg>
<span style="left:2188px;top:854.50px;font-size:18px;line-height:18px;color:#a6a6a6;letter-spacing:-0.008px;-webkit-text-stroke:0.3px;">Keying</span>
<svg style="left:2172px;top:884.96px;" width="7.8" height="14.2" viewBox="0 0 7.8 14.2"><path d="M1 1L6.8 7.1L1 13.2" stroke="#bcbcbc" stroke-width="1.6" fill="none" stroke-linecap="round" stroke-linejoin="round"/></svg>
<span style="left:2188px;top:882.72px;font-size:18px;line-height:18px;color:#a6a6a6;letter-spacing:0.245px;-webkit-text-stroke:0.3px;">Matte</span>
<div style="left:2163.2px;top:904.9px;width:338.3px;height:1.5px;background:#000;"></div>
<svg style="left:2470px;top:910px;" width="20" height="20" viewBox="0 0 20 20"><path d="M0 0H20V20H13V7H0Z" fill="#c0c0c0"/><path d="M1 9.5H11V19.5Z" fill="#c0c0c0"/></svg>
<div style="left:0px;top:940.6px;width:2500px;height:1.9px;background:#4588e0;"></div>
<div style="left:0px;top:942.5px;width:2500px;height:1px;background:#1a1614;"></div>
<div style="left:0px;top:943.5px;width:2500px;height:479px;background:#262626;"></div>
<div style="left:41px;top:953.8px;width:17.5px;height:17.5px;background:#ad9e80;"></div>
<span style="left:76px;top:955.36px;font-size:18px;line-height:18px;color:#a6a6a6;letter-spacing:-0.159px;-webkit-text-stroke:0.3px;">TEXT_Elevation</span>
<div style="left:295px;top:953.8px;width:17.5px;height:17.5px;background:#ad9e80;"></div>
<span style="left:330px;top:955.36px;font-size:18px;line-height:18px;color:#a6a6a6;letter-spacing:0.097px;-webkit-text-stroke:0.3px;">Candy_Heart_008_0042</span>
<div style="left:619px;top:953.8px;width:17.5px;height:17.5px;background:#ad9e80;"></div>
<span style="left:653px;top:955.36px;font-size:18px;line-height:18px;color:#a6a6a6;letter-spacing:-0.605px;-webkit-text-stroke:0.3px;">TEXT_1</span>
<div style="left:808px;top:953.8px;width:17.5px;height:17.5px;background:#ad9e80;"></div>
<span style="left:842px;top:955.36px;font-size:18px;line-height:18px;color:#a6a6a6;letter-spacing:-0.605px;-webkit-text-stroke:0.3px;">TEXT_2</span>
<svg style="left:971.5px;top:960px;" width="9" height="9" viewBox="0 0 9 9"><path d="M0.5 0.5L8.5 8.5M8.5 0.5L0.5 8.5" stroke="#9a9a9a" stroke-width="1.5" fill="none"/></svg>
<div style="left:997px;top:953.8px;width:17.5px;height:17.5px;background:#ad9e80;"></div>
<span style="left:1031px;top:955.36px;font-size:18px;line-height:18px;color:#dcdcdc;letter-spacing:-0.605px;-webkit-text-stroke:0.3px;">TEXT_3</span>
<svg style="left:1111px;top:959px;" width="14" height="12" viewBox="0 0 14 12"><rect x="0" y="0" width="14" height="1.6" fill="#c0c0c0"/><rect x="0" y="5" width="14" height="1.6" fill="#c0c0c0"/><rect x="0" y="10" width="14" height="1.6" fill="#c0c0c0"/></svg>
<div style="left:972px;top:980.6px;width:154px;height:3.4px;background:#cfcfcf;border-radius:1px;"></div>
<span style="left:1188px;top:955.36px;font-size:18px;line-height:18px;color:#a6a6a6;letter-spacing:-0.189px;-webkit-text-stroke:0.3px;">Render Queue</span>
<span style="left:61.5px;top:994.86px;font-size:24.5px;line-height:24.5px;color:#4b9ef0;letter-spacing:0.342px;font-weight:700;">00000</span>
<span style="left:17px;top:1022.63px;font-size:16.5px;line-height:16.5px;color:#3676c6;letter-spacing:-0.021px;-webkit-text-stroke:0.3px;">0:00:00:00 (24.00 fps)</span>
<div style="left:196.6px;top:1000px;width:1998.6px;height:31px;background:#161616;border-radius:5px;box-shadow:inset 0 0 0 1.4px #303030;"></div>
<svg style="left:207.5px;top:1005.5px;" width="29" height="19" viewBox="0 0 29 19"><circle cx="11.4" cy="6.7" r="6" stroke="#c4c4c4" stroke-width="1.6" fill="none"/><path d="M7.2 11.2L0.8 17.6" stroke="#c4c4c4" stroke-width="1.7" fill="none" stroke-linecap="round"/><path d="M18 11.6H28.5L23.25 16.9Z" fill="#c4c4c4"/></svg>
<svg style="left:2221px;top:1006px;" width="30" height="22" viewBox="0 0 30 22"><rect x="3.6" y="1" width="6.4" height="4" fill="#b8b8b8"/><rect x="18.8" y="1" width="6.4" height="4" fill="#b8b8b8"/><rect x="18.8" y="9.4" width="6.4" height="4" fill="#b8b8b8"/><path d="M0.6 3H19M14.4 3V11.4H19" stroke="#b8b8b8" stroke-width="1.3" fill="none"/><path d="M21 16.4H29.2L25.1 20.8Z" fill="#b8b8b8"/></svg>
<svg style="left:2278px;top:1005px;" width="26.4" height="20.6" viewBox="0 0 26.4 20.6"><rect x="0" y="11.6" width="26.4" height="9" fill="#7a7a7a"/><path d="M5 9.4C5 3.8 8.4 1 13.2 1C18 1 21.4 3.8 21.4 9.4Z" fill="#b8b8b8"/><rect x="1.4" y="7.6" width="23.6" height="2.6" fill="#b8b8b8"/><rect x="1.4" y="6.2" width="1.6" height="3" fill="#b8b8b8"/><rect x="23.4" y="6.2" width="1.6" height="3" fill="#b8b8b8"/><rect x="11" y="8" width="4.4" height="9.6" rx="2" fill="#b8b8b8"/><circle cx="10.4" cy="5.8" r="1.8" fill="#262626"/><circle cx="16" cy="5.8" r="1.8" fill="#262626"/></svg>
<svg style="left:2322px;top:1004px;" width="25" height="23.4" viewBox="0 0 25 23.4"><path d="M0 6.4H5V18.4H16.4V23H0Z" fill="#b8b8b8"/><rect x="1.4" y="8" width="1.7" height="1.8" fill="#262626"/><rect x="1.4" y="11.5" width="1.7" height="1.8" fill="#262626"/><rect x="1.4" y="15" width="1.7" height="1.8" fill="#262626"/><rect x="1.4" y="18.5" width="1.7" height="1.8" fill="#262626"/><rect x="7.8" y="0" width="16.4" height="18.4" fill="#b8b8b8"/><rect x="9.6" y="1.6" width="1.7" height="1.8" fill="#262626"/><rect x="20.6" y="1.6" width="1.7" height="1.8" fill="#262626"/><rect x="9.6" y="5.1" width="1.7" height="1.8" fill="#262626"/><rect x="20.6" y="5.1" width="1.7" height="1.8" fill="#262626"/><rect x="9.6" y="8.6" width="1.7" height="1.8" fill="#262626"/><rect x="20.6" y="8.6" width="1.7" height="1.8" fill="#262626"/><rect x="9.6" y="12.1" width="1.7" height="1.8" fill="#262626"/><rect x="20.6" y="12.1" width="1.7" height="1.8" fill="#262626"/><rect x="9.6" y="15.6" width="1.7" height="1.8" fill="#262626"/><rect x="20.6" y="15.6" width="1.7" height="1.8" fill="#262626"/><rect x="12.4" y="7.6" width="7.2" height="2.4" fill="#262626"/></svg>
<svg style="left:2364.6px;top:1003.6px;" width="25" height="24" viewBox="0 0 25 24"><circle cx="8.6" cy="15.6" r="7.4" stroke="#b8b8b8" stroke-width="1.5" fill="#262626"/><circle cx="12.2" cy="12" r="7.4" stroke="#b8b8b8" stroke-width="1.5" fill="#262626"/><circle cx="15.8" cy="8.6" r="7.4" stroke="#b8b8b8" stroke-width="1.5" fill="#6a6a6a"/></svg>
<svg style="left:2419.6px;top:1002px;" width="28" height="25.6" viewBox="0 0 28 25.6"><rect x="3" y="3.6" width="23.6" height="20.6" stroke="#b8b8b8" stroke-width="1.7" fill="none"/><path d="M6.6 8.2C14 8.2 13.6 19.4 22.6 19.4" stroke="#b8b8b8" stroke-width="1.6" fill="none"/><path d="M11.4 0.4V3.6M16 1.6V3.6M21 0.4V3.6M0.6 9H3M0.6 13.6H3M0.6 18.4H3" stroke="#b8b8b8" stroke-width="1.4" fill="none"/></svg>
<div style="left:2473.6px;top:994px;width:1px;height:78px;background:#1a1a1a;"></div>
<div style="left:2472.4px;top:1019px;width:2.6px;height:11px;background:#d8d8d8;border-radius:1.3px;"></div>
<div style="left:0px;top:1045.2px;width:2473.6px;height:1.7px;background:#000;"></div>
<div style="left:0px;top:1046.7px;width:2500px;height:29.6px;background:#232323;"></div>
<div style="left:0px;top:1076.5px;width:2500px;height:1.6px;background:#000;"></div>
<svg style="left:8.8px;top:1056.3px;" width="18" height="13" viewBox="0 0 18 13"><path d="M0.5 6.5C3 2.2 6 0.6 9 0.6C12 0.6 15 2.2 17.5 6.5C15 10.8 12 12.4 9 12.4C6 12.4 3 10.8 0.5 6.5Z" fill="#c2c2c2"/><circle cx="9" cy="6.3" r="3.9" fill="#232323"/><circle cx="9" cy="6.3" r="2" fill="#c2c2c2"/></svg>
<svg style="left:32.5px;top:1053px;" width="20" height="20" viewBox="0 0 20 20"><path d="M0.5 6.5H4.5L10 1V19L4.5 13.5H0.5Z" fill="#c2c2c2"/><path d="M12.2 5.8A5 5 0 0 1 12.2 14.2M12.6 1.6A9 9 0 0 1 12.6 18.4" stroke="#c2c2c2" stroke-width="1.7" fill="none"/></svg>
<svg style="left:61px;top:1056.6px;" width="12" height="12" viewBox="0 0 12 12"><circle cx="6" cy="6" r="6" fill="#c2c2c2"/></svg>
<svg style="left:83.5px;top:1053px;" width="17" height="18" viewBox="0 0 17 18"><path d="M4 8V5.6C4 2.8 6 1.2 8.5 1.2C11 1.2 13 2.8 13 5.6V8" stroke="#c2c2c2" stroke-width="2" fill="none"/><rect x="1" y="7.4" width="15" height="10" rx="1" fill="#c2c2c2"/><circle cx="8.5" cy="11.4" r="1.8" fill="#232323"/><rect x="7.7" y="11.6" width="1.6" height="3.6" fill="#232323"/></svg>
<div style="left:111.2px;top:1054px;width:1.8px;height:17.5px;background:#0e0e0e;"></div>
<svg style="left:134.5px;top:1052.5px;" width="21" height="21" viewBox="0 0 21 21"><path d="M1 1H9.4L20 11.6L11.6 20L1 9.4Z" fill="#c2c2c2"/><circle cx="5.2" cy="5.2" r="1.9" fill="#232323"/></svg>
<div style="left:164.4px;top:1054px;width:1.8px;height:17.5px;background:#0e0e0e;"></div>
<span style="left:174px;top:1054.70px;font-size:15px;line-height:15px;color:#a0a0a0;letter-spacing:0.657px;-webkit-text-stroke:0.3px;">#</span>
<div style="left:219.2px;top:1054px;width:1.8px;height:17.5px;background:#0e0e0e;"></div>
<span style="left:229px;top:1054.70px;font-size:15px;line-height:15px;color:#a0a0a0;letter-spacing:-0.078px;-webkit-text-stroke:0.3px;">Layer Name</span>
<div style="left:789.6px;top:1054px;width:1.8px;height:17.5px;background:#0e0e0e;"></div>
<span style="left:800px;top:1054.70px;font-size:15px;line-height:15px;color:#a0a0a0;letter-spacing:0.159px;-webkit-text-stroke:0.3px;">Mode</span>
<span style="left:1322px;top:1054.70px;font-size:15px;line-height:15px;color:#a0a0a0;letter-spacing:-1.163px;-webkit-text-stroke:0.3px;">T</span>
<span style="left:1350px;top:1054.70px;font-size:15px;line-height:15px;color:#a0a0a0;letter-spacing:-0.063px;-webkit-text-stroke:0.3px;">Track Matte</span>
<svg style="left:1887.8px;top:1054px;" width="18.4" height="18" viewBox="0 0 18.4 18"><rect width="18.4" height="18" fill="#c2c2c2"/><circle cx="9.2" cy="9" r="5.9" fill="#232323"/></svg>
<svg style="left:1912.6px;top:1054px;" width="18.4" height="18" viewBox="0 0 18.4 18"><path d="M0 0H18.4L0 18Z" fill="#c2c2c2"/><circle cx="9.6" cy="8.8" r="6" fill="#c2c2c2"/><path d="M3.4 8.4A6 6 0 0 1 13.8 4.4L5.4 12.9A6 6 0 0 1 3.4 8.4Z" fill="#151515"/></svg>
<div style="left:1935.6px;top:1054px;width:1.8px;height:17.5px;background:#0e0e0e;"></div>
<svg style="left:1944.7px;top:1051.9px;" width="21" height="19" viewBox="0 0 21 19"><path d="M2.8 11C2.8 4.6 6 1 10.5 1C15 1 18.2 4.6 18.2 11Z" fill="#c2c2c2"/><rect x="8.9" y="10" width="3.3" height="7.4" rx="1.6" fill="#c2c2c2"/><circle cx="7.5" cy="6.8" r="1.9" fill="#232323"/><circle cx="13.6" cy="6.8" r="1.9" fill="#232323"/><rect x="0.4" y="13" width="6.8" height="2" fill="#c2c2c2"/><rect x="13.8" y="13" width="6.8" height="2" fill="#c2c2c2"/></svg>
<svg style="left:1971.5px;top:1054.1px;" width="17" height="17" viewBox="0 0 17 17"><g transform="translate(8.5,8.5)"><path d="M0 -3.4V-8.3" stroke="#c2c2c2" stroke-width="2" transform="rotate(0)"/><path d="M0 -3.4V-8.3" stroke="#c2c2c2" stroke-width="2" transform="rotate(45)"/><path d="M0 -3.4V-8.3" stroke="#c2c2c2" stroke-width="2" transform="rotate(90)"/><path d="M0 -3.4V-8.3" stroke="#c2c2c2" stroke-width="2" transform="rotate(135)"/><path d="M0 -3.4V-8.3" stroke="#c2c2c2" stroke-width="2" transform="rotate(180)"/><path d="M0 -3.4V-8.3" stroke="#c2c2c2" stroke-width="2" transform="rotate(225)"/><path d="M0 -3.4V-8.3" stroke="#c2c2c2" stroke-width="2" transform="rotate(270)"/><path d="M0 -3.4V-8.3" stroke="#c2c2c2" stroke-width="2" transform="rotate(315)"/><circle r="2.7" stroke="#c2c2c2" stroke-width="1.9" fill="none"/></g></svg>
<svg style="left:1994.5px;top:1052.5px;" width="20" height="19" viewBox="0 0 20 19"><rect x="1" y="1" width="3.4" height="3.2" fill="#c2c2c2"/><rect x="3.9" y="3.75" width="3.4" height="3.2" fill="#c2c2c2"/><rect x="6.8" y="6.5" width="3.4" height="3.2" fill="#c2c2c2"/><rect x="9.7" y="9.25" width="3.4" height="3.2" fill="#c2c2c2"/><rect x="12.6" y="12" width="3.4" height="3.2" fill="#c2c2c2"/><rect x="15.5" y="14.75" width="3.4" height="3.2" fill="#c2c2c2"/></svg>
<span style="left:2020.5px;top:1047.78px;font-size:22px;line-height:22px;color:#c2c2c2;font-style:italic;font-family:'Liberation Serif',serif;">f</span>
<span style="left:2026.7px;top:1050.08px;font-size:20.5px;line-height:20.5px;color:#c2c2c2;font-style:italic;">x</span>
<svg style="left:2044px;top:1053.5px;" width="20.4" height="18.6" viewBox="0 0 20.4 18.6"><path d="M0.8 2V17.8H18" stroke="#c2c2c2" stroke-width="1.5" fill="none"/><rect x="3.4" y="0" width="17" height="14.6" fill="#c2c2c2"/><rect x="7.4" y="5.8" width="9" height="2.6" fill="#232323"/><rect x="4.6" y="1.2" width="1.6" height="1.7" fill="#232323"/><rect x="17.6" y="1.2" width="1.6" height="1.7" fill="#232323"/><rect x="4.6" y="4.5" width="1.6" height="1.7" fill="#232323"/><rect x="17.6" y="4.5" width="1.6" height="1.7" fill="#232323"/><rect x="4.6" y="7.8" width="1.6" height="1.7" fill="#232323"/><rect x="17.6" y="7.8" width="1.6" height="1.7" fill="#232323"/><rect x="4.6" y="11.1" width="1.6" height="1.7" fill="#232323"/><rect x="17.6" y="11.1" width="1.6" height="1.7" fill="#232323"/></svg>
<svg style="left:2069px;top:1052px;" width="21.4" height="21.4" viewBox="0 0 21.4 21.4"><circle cx="7.4" cy="14" r="6.6" stroke="#c2c2c2" stroke-width="1.4" fill="#232323"/><circle cx="10.6" cy="10.8" r="6.6" stroke="#c2c2c2" stroke-width="1.4" fill="#232323"/><circle cx="13.8" cy="7.6" r="6.6" stroke="#c2c2c2" stroke-width="1.4" fill="#6e6e6e"/></svg>
<svg style="left:2095.6px;top:1053.6px;" width="18" height="18" viewBox="0 0 18 18"><circle cx="9" cy="9" r="7.8" stroke="#c2c2c2" stroke-width="1.6" fill="none"/><path d="M14.5 3.5A7.8 7.8 0 0 1 3.5 14.5Z" fill="#c2c2c2"/></svg>
<svg style="left:2121px;top:1053.5px;" width="16.4" height="18" viewBox="0 0 16.4 18"><path d="M8.2 1L15.4 4.8V13.2L8.2 17L1 13.2V4.8ZM1 4.8L8.2 8.6L15.4 4.8M8.2 8.6V17" stroke="#c2c2c2" stroke-width="1.6" fill="none" stroke-linejoin="round"/></svg>
<div style="left:2163px;top:1054px;width:1.8px;height:17.5px;background:#0e0e0e;"></div>
<span style="left:2173px;top:1054.70px;font-size:15px;line-height:15px;color:#a0a0a0;letter-spacing:0.162px;-webkit-text-stroke:0.3px;">Parent &amp; Link</span>
<div style="left:2463.4px;top:1054px;width:1.8px;height:17.5px;background:#0e0e0e;"></div>
<svg style="left:2479.6px;top:1048.6px;" width="19" height="24" viewBox="0 0 19 24"><path d="M0 0H19V14L9.5 23.6L0 14Z" fill="#b8b8b8"/></svg>
<div style="left:2473.6px;top:1078.1px;width:26.4px;height:316.5px;background:#232323;"></div>
<div style="left:0px;top:1078.6px;width:2474px;height:26.5px;background:#484848;"></div>
<div style="left:0px;top:1105.1px;width:2474px;height:1.9px;background:#222222;"></div>
<div style="left:6.8px;top:1080.2px;width:21.4px;height:21.6px;background:#3b3b3b;"></div>
<svg style="left:8.8px;top:1084.1px;" width="18" height="13" viewBox="0 0 18 13"><path d="M0.5 6.5C3 2.2 6 0.6 9 0.6C12 0.6 15 2.2 17.5 6.5C15 10.8 12 12.4 9 12.4C6 12.4 3 10.8 0.5 6.5Z" fill="#c2c2c2"/><circle cx="9" cy="6.3" r="3.9" fill="#3b3b3b"/><circle cx="9" cy="6.3" r="2" fill="#c2c2c2"/></svg>
<div style="left:56.4px;top:1080.2px;width:21.6px;height:21.6px;background:#3b3b3b;"></div>
<div style="left:81.2px;top:1080.2px;width:21.8px;height:21.6px;background:#3b3b3b;"></div>
<svg style="left:121.7px;top:1085.5px;" width="8" height="14" viewBox="0 0 8 14"><path d="M1 1L7 7L1 13" stroke="#b8b8b8" stroke-width="1.7" fill="none" stroke-linecap="round" stroke-linejoin="round"/></svg>
<div style="left:141px;top:1081.8px;width:20px;height:20.2px;background:#ad9e80;"></div>
<span style="left:176.5px;top:1082.96px;font-size:18px;line-height:18px;color:#b4b4b4;font-weight:700;">1</span>
<svg style="left:222px;top:1081.6px;" width="27" height="21" viewBox="0 0 27 21"><rect x="0" y="0" width="27" height="21" fill="#c0c0c0"/><rect x="0" y="0" width="27" height="1.3" fill="#4a4a4a"/><rect x="4" y="1.5" width="19" height="16.5" fill="#c0c0c0"/><rect x="0.8" y="2" width="2.2" height="2" fill="#3a3a3a"/><rect x="24" y="2" width="2.2" height="2" fill="#3a3a3a"/><rect x="0.8" y="5.8" width="2.2" height="2" fill="#3a3a3a"/><rect x="24" y="5.8" width="2.2" height="2" fill="#3a3a3a"/><rect x="0.8" y="9.6" width="2.2" height="2" fill="#3a3a3a"/><rect x="24" y="9.6" width="2.2" height="2" fill="#3a3a3a"/><rect x="0.8" y="13.4" width="2.2" height="2" fill="#3a3a3a"/><rect x="24" y="13.4" width="2.2" height="2" fill="#3a3a3a"/><rect x="0.8" y="17.2" width="2.2" height="2" fill="#3a3a3a"/><rect x="24" y="17.2" width="2.2" height="2" fill="#3a3a3a"/><rect x="3.6" y="1.3" width="0.8" height="19.7" fill="#555"/><rect x="22.6" y="1.3" width="0.8" height="19.7" fill="#555"/><rect x="4.4" y="17.6" width="18.2" height="1.2" fill="#555"/><circle cx="10.3" cy="6.8" r="3" fill="#3b82e6"/><path d="M13.5 6L20.4 6.8L19.4 13L14.5 11Z" fill="#e24a3b"/><path d="M12.6 8.6L17.2 15.4H8Z" fill="#2e9e3a"/></svg>
<div style="left:250.6px;top:1078.8px;width:539.6px;height:26.4px;background:#a8a8a8;"></div>
<span style="left:256px;top:1082.56px;font-size:18px;line-height:18px;color:#161616;letter-spacing:0.284px;font-weight:700;">[text 4]</span>
<div style="left:795.8px;top:1080.4px;width:511.4px;height:22.6px;background:#1c1c1c;"></div>
<span style="left:806px;top:1083.46px;font-size:18px;line-height:18px;color:#d8d8d8;letter-spacing:0.105px;-webkit-text-stroke:0.3px;">Soft Light</span>
<svg style="left:1286.4px;top:1088.4px;" width="12.8" height="7.2" viewBox="0 0 12.8 7.2"><path d="M1 1L6.4 6.2L11.8 1" stroke="#d0d0d0" stroke-width="1.7" fill="none" stroke-linecap="round" stroke-linejoin="round"/></svg>
<div style="left:1315.6px;top:1080.2px;width:21.2px;height:21.6px;background:#3b3b3b;"></div>
<svg style="left:1344.9px;top:1081.5px;" width="20" height="19" viewBox="0 0 21 20"><path d="M10 7.6A2.75 2.75 0 0 0 10 13.1A5.5 5.5 0 0 0 9.8 2.1A8.05 8.05 0 0 0 10.2 18.2A10.1 10.1 0 0 0 18.9 2.8" stroke="#bcbcbc" stroke-width="1.6" fill="none" stroke-linecap="round"/></svg>
<div style="left:1372px;top:1080.4px;width:511px;height:22.6px;background:#1c1c1c;"></div>
<span style="left:1382px;top:1083.46px;font-size:18px;line-height:18px;color:#d8d8d8;letter-spacing:0.282px;-webkit-text-stroke:0.3px;">No Matte</span>
<svg style="left:1861.4px;top:1088.4px;" width="12.8" height="7.2" viewBox="0 0 12.8 7.2"><path d="M1 1L6.4 6.2L11.8 1" stroke="#d0d0d0" stroke-width="1.7" fill="none" stroke-linecap="round" stroke-linejoin="round"/></svg>
<div style="left:1944.2px;top:1080.2px;width:21.5px;height:21.6px;background:#3b3b3b;"></div>
<div style="left:1969px;top:1080.2px;width:21.5px;height:21.6px;background:#3b3b3b;"></div>
<div style="left:1994px;top:1080.2px;width:21.5px;height:21.6px;background:#3b3b3b;"></div>
<div style="left:2019px;top:1080.2px;width:21.5px;height:21.6px;background:#3b3b3b;"></div>
<div style="left:2069px;top:1080.2px;width:21.5px;height:21.6px;background:#3b3b3b;"></div>
<div style="left:2093.6px;top:1080.2px;width:21.5px;height:21.6px;background:#3b3b3b;"></div>
<div style="left:2118.4px;top:1080.2px;width:21.5px;height:21.6px;background:#3b3b3b;"></div>
<svg style="left:1944.8px;top:1082px;" width="21" height="19" viewBox="0 0 21 19"><path d="M2.8 11C2.8 4.6 6 1 10.5 1C15 1 18.2 4.6 18.2 11Z" fill="#c2c2c2"/><rect x="8.9" y="10" width="3.3" height="7.4" rx="1.6" fill="#c2c2c2"/><circle cx="7.5" cy="6.8" r="1.9" fill="#3b3b3b"/><circle cx="13.6" cy="6.8" r="1.9" fill="#3b3b3b"/><rect x="0.4" y="13" width="6.8" height="2" fill="#c2c2c2"/><rect x="13.8" y="13" width="6.8" height="2" fill="#c2c2c2"/></svg>
<svg style="left:1995px;top:1080.6px;" width="20" height="20" viewBox="0 0 20 20"><path d="M2 18L18 2" stroke="#c2c2c2" stroke-width="2.6" fill="none" stroke-linecap="round"/></svg>
<span style="left:2020.5px;top:1078.00px;font-size:21.5px;line-height:21.5px;color:#c2c2c2;font-style:italic;font-family:'Liberation Serif',serif;">f</span>
<span style="left:2026.7px;top:1080.27px;font-size:20.0px;line-height:20.0px;color:#c2c2c2;font-style:italic;">x</span>
<svg style="left:2170.4px;top:1081.5px;" width="20" height="19" viewBox="0 0 21 20"><path d="M10 7.6A2.75 2.75 0 0 0 10 13.1A5.5 5.5 0 0 0 9.8 2.1A8.05 8.05 0 0 0 10.2 18.2A10.1 10.1 0 0 0 18.9 2.8" stroke="#bcbcbc" stroke-width="1.6" fill="none" stroke-linecap="round"/></svg>
<div style="left:2203px;top:1080.4px;width:254px;height:22.6px;background:#1c1c1c;"></div>
<span style="left:2213.5px;top:1083.46px;font-size:18px;line-height:18px;color:#d8d8d8;letter-spacing:-0.011px;-webkit-text-stroke:0.3px;">None</span>
<svg style="left:2436.4px;top:1088.4px;" width="12.8" height="7.2" viewBox="0 0 12.8 7.2"><path d="M1 1L6.4 6.2L11.8 1" stroke="#d0d0d0" stroke-width="1.7" fill="none" stroke-linecap="round" stroke-linejoin="round"/></svg>
<div style="left:0px;top:1106.8px;width:2474px;height:26.5px;background:#2f2f2f;"></div>
<div style="left:0px;top:1133.3px;width:2474px;height:1.9px;background:#222222;"></div>
<div style="left:6.8px;top:1108.4px;width:21.4px;height:21.6px;background:#1f1f1f;"></div>
<svg style="left:8.8px;top:1112.3px;" width="18" height="13" viewBox="0 0 18 13"><path d="M0.5 6.5C3 2.2 6 0.6 9 0.6C12 0.6 15 2.2 17.5 6.5C15 10.8 12 12.4 9 12.4C6 12.4 3 10.8 0.5 6.5Z" fill="#c2c2c2"/><circle cx="9" cy="6.3" r="3.9" fill="#1f1f1f"/><circle cx="9" cy="6.3" r="2" fill="#c2c2c2"/></svg>
<div style="left:56.4px;top:1108.4px;width:21.6px;height:21.6px;background:#1f1f1f;"></div>
<div style="left:81.2px;top:1108.4px;width:21.8px;height:21.6px;background:#1f1f1f;"></div>
<svg style="left:121.7px;top:1113.7px;" width="8" height="14" viewBox="0 0 8 14"><path d="M1 1L7 7L1 13" stroke="#b8b8b8" stroke-width="1.7" fill="none" stroke-linecap="round" stroke-linejoin="round"/></svg>
<div style="left:141px;top:1110px;width:20px;height:20.2px;background:#ad9e80;"></div>
<span style="left:176.5px;top:1111.16px;font-size:18px;line-height:18px;color:#b4b4b4;font-weight:700;">2</span>
<svg style="left:222px;top:1109.8px;" width="27" height="21" viewBox="0 0 27 21"><rect x="0" y="0" width="27" height="21" fill="#c0c0c0"/><rect x="0" y="0" width="27" height="1.3" fill="#4a4a4a"/><rect x="4" y="1.5" width="19" height="16.5" fill="#c0c0c0"/><rect x="0.8" y="2" width="2.2" height="2" fill="#3a3a3a"/><rect x="24" y="2" width="2.2" height="2" fill="#3a3a3a"/><rect x="0.8" y="5.8" width="2.2" height="2" fill="#3a3a3a"/><rect x="24" y="5.8" width="2.2" height="2" fill="#3a3a3a"/><rect x="0.8" y="9.6" width="2.2" height="2" fill="#3a3a3a"/><rect x="24" y="9.6" width="2.2" height="2" fill="#3a3a3a"/><rect x="0.8" y="13.4" width="2.2" height="2" fill="#3a3a3a"/><rect x="24" y="13.4" width="2.2" height="2" fill="#3a3a3a"/><rect x="0.8" y="17.2" width="2.2" height="2" fill="#3a3a3a"/><rect x="24" y="17.2" width="2.2" height="2" fill="#3a3a3a"/><rect x="3.6" y="1.3" width="0.8" height="19.7" fill="#555"/><rect x="22.6" y="1.3" width="0.8" height="19.7" fill="#555"/><rect x="4.4" y="17.6" width="18.2" height="1.2" fill="#555"/><circle cx="10.3" cy="6.8" r="3" fill="#3b82e6"/><path d="M13.5 6L20.4 6.8L19.4 13L14.5 11Z" fill="#e24a3b"/><path d="M12.6 8.6L17.2 15.4H8Z" fill="#2e9e3a"/></svg>
<span style="left:256px;top:1110.76px;font-size:18px;line-height:18px;color:#b4b4b4;letter-spacing:0.284px;font-weight:700;">[text 4]</span>
<div style="left:795.8px;top:1108.6px;width:511.4px;height:22.6px;background:#1c1c1c;"></div>
<span style="left:806px;top:1111.66px;font-size:18px;line-height:18px;color:#d8d8d8;letter-spacing:0.855px;-webkit-text-stroke:0.3px;">Multiply</span>
<svg style="left:1286.4px;top:1116.6px;" width="12.8" height="7.2" viewBox="0 0 12.8 7.2"><path d="M1 1L6.4 6.2L11.8 1" stroke="#d0d0d0" stroke-width="1.7" fill="none" stroke-linecap="round" stroke-linejoin="round"/></svg>
<div style="left:1315.6px;top:1108.4px;width:21.2px;height:21.6px;background:#1f1f1f;"></div>
<svg style="left:1344.9px;top:1109.7px;" width="20" height="19" viewBox="0 0 21 20"><path d="M10 7.6A2.75 2.75 0 0 0 10 13.1A5.5 5.5 0 0 0 9.8 2.1A8.05 8.05 0 0 0 10.2 18.2A10.1 10.1 0 0 0 18.9 2.8" stroke="#bcbcbc" stroke-width="1.6" fill="none" stroke-linecap="round"/></svg>
<div style="left:1372px;top:1108.6px;width:511px;height:22.6px;background:#1c1c1c;"></div>
<span style="left:1382px;top:1111.66px;font-size:18px;line-height:18px;color:#d8d8d8;letter-spacing:0.282px;-webkit-text-stroke:0.3px;">No Matte</span>
<svg style="left:1861.4px;top:1116.6px;" width="12.8" height="7.2" viewBox="0 0 12.8 7.2"><path d="M1 1L6.4 6.2L11.8 1" stroke="#d0d0d0" stroke-width="1.7" fill="none" stroke-linecap="round" stroke-linejoin="round"/></svg>
<div style="left:1944.2px;top:1108.4px;width:21.5px;height:21.6px;background:#1f1f1f;"></div>
<div style="left:1969px;top:1108.4px;width:21.5px;height:21.6px;background:#1f1f1f;"></div>
<div style="left:1994px;top:1108.4px;width:21.5px;height:21.6px;background:#1f1f1f;"></div>
<div style="left:2019px;top:1108.4px;width:21.5px;height:21.6px;background:#1f1f1f;"></div>
<div style="left:2069px;top:1108.4px;width:21.5px;height:21.6px;background:#1f1f1f;"></div>
<div style="left:2093.6px;top:1108.4px;width:21.5px;height:21.6px;background:#1f1f1f;"></div>
<div style="left:2118.4px;top:1108.4px;width:21.5px;height:21.6px;background:#1f1f1f;"></div>
<svg style="left:1944.8px;top:1110.2px;" width="21" height="19" viewBox="0 0 21 19"><path d="M2.8 11C2.8 4.6 6 1 10.5 1C15 1 18.2 4.6 18.2 11Z" fill="#c2c2c2"/><rect x="8.9" y="10" width="3.3" height="7.4" rx="1.6" fill="#c2c2c2"/><circle cx="7.5" cy="6.8" r="1.9" fill="#1f1f1f"/><circle cx="13.6" cy="6.8" r="1.9" fill="#1f1f1f"/><rect x="0.4" y="13" width="6.8" height="2" fill="#c2c2c2"/><rect x="13.8" y="13" width="6.8" height="2" fill="#c2c2c2"/></svg>
<svg style="left:1995px;top:1108.8px;" width="20" height="20" viewBox="0 0 20 20"><path d="M2 18L18 2" stroke="#c2c2c2" stroke-width="2.6" fill="none" stroke-linecap="round"/></svg>
<span style="left:2020.5px;top:1106.20px;font-size:21.5px;line-height:21.5px;color:#c2c2c2;font-style:italic;font-family:'Liberation Serif',serif;">f</span>
<span style="left:2026.7px;top:1108.47px;font-size:20.0px;line-height:20.0px;color:#c2c2c2;font-style:italic;">x</span>
<svg style="left:2170.4px;top:1109.7px;" width="20" height="19" viewBox="0 0 21 20"><path d="M10 7.6A2.75 2.75 0 0 0 10 13.1A5.5 5.5 0 0 0 9.8 2.1A8.05 8.05 0 0 0 10.2 18.2A10.1 10.1 0 0 0 18.9 2.8" stroke="#bcbcbc" stroke-width="1.6" fill="none" stroke-linecap="round"/></svg>
<div style="left:2203px;top:1108.6px;width:254px;height:22.6px;background:#1c1c1c;"></div>
<span style="left:2213.5px;top:1111.66px;font-size:18px;line-height:18px;color:#d8d8d8;letter-spacing:-0.011px;-webkit-text-stroke:0.3px;">None</span>
<svg style="left:2436.4px;top:1116.6px;" width="12.8" height="7.2" viewBox="0 0 12.8 7.2"><path d="M1 1L6.4 6.2L11.8 1" stroke="#d0d0d0" stroke-width="1.7" fill="none" stroke-linecap="round" stroke-linejoin="round"/></svg>
<div style="left:0px;top:1135px;width:2474px;height:26.5px;background:#2f2f2f;"></div>
<div style="left:0px;top:1161.5px;width:2474px;height:1.9px;background:#222222;"></div>
<div style="left:6.8px;top:1136.6px;width:21.4px;height:21.6px;background:#1f1f1f;"></div>
<svg style="left:8.8px;top:1140.5px;" width="18" height="13" viewBox="0 0 18 13"><path d="M0.5 6.5C3 2.2 6 0.6 9 0.6C12 0.6 15 2.2 17.5 6.5C15 10.8 12 12.4 9 12.4C6 12.4 3 10.8 0.5 6.5Z" fill="#c2c2c2"/><circle cx="9" cy="6.3" r="3.9" fill="#1f1f1f"/><circle cx="9" cy="6.3" r="2" fill="#c2c2c2"/></svg>
<div style="left:56.4px;top:1136.6px;width:21.6px;height:21.6px;background:#1f1f1f;"></div>
<div style="left:81.2px;top:1136.6px;width:21.8px;height:21.6px;background:#1f1f1f;"></div>
<svg style="left:121.7px;top:1141.9px;" width="8" height="14" viewBox="0 0 8 14"><path d="M1 1L7 7L1 13" stroke="#b8b8b8" stroke-width="1.7" fill="none" stroke-linecap="round" stroke-linejoin="round"/></svg>
<div style="left:141px;top:1138.2px;width:20px;height:20.2px;background:#ad9e80;"></div>
<span style="left:176.5px;top:1139.36px;font-size:18px;line-height:18px;color:#b4b4b4;font-weight:700;">3</span>
<svg style="left:222px;top:1138px;" width="27" height="21" viewBox="0 0 27 21"><rect x="0" y="0" width="27" height="21" fill="#c0c0c0"/><rect x="0" y="0" width="27" height="1.3" fill="#4a4a4a"/><rect x="4" y="1.5" width="19" height="16.5" fill="#c0c0c0"/><rect x="0.8" y="2" width="2.2" height="2" fill="#3a3a3a"/><rect x="24" y="2" width="2.2" height="2" fill="#3a3a3a"/><rect x="0.8" y="5.8" width="2.2" height="2" fill="#3a3a3a"/><rect x="24" y="5.8" width="2.2" height="2" fill="#3a3a3a"/><rect x="0.8" y="9.6" width="2.2" height="2" fill="#3a3a3a"/><rect x="24" y="9.6" width="2.2" height="2" fill="#3a3a3a"/><rect x="0.8" y="13.4" width="2.2" height="2" fill="#3a3a3a"/><rect x="24" y="13.4" width="2.2" height="2" fill="#3a3a3a"/><rect x="0.8" y="17.2" width="2.2" height="2" fill="#3a3a3a"/><rect x="24" y="17.2" width="2.2" height="2" fill="#3a3a3a"/><rect x="3.6" y="1.3" width="0.8" height="19.7" fill="#555"/><rect x="22.6" y="1.3" width="0.8" height="19.7" fill="#555"/><rect x="4.4" y="17.6" width="18.2" height="1.2" fill="#555"/><circle cx="10.3" cy="6.8" r="3" fill="#3b82e6"/><path d="M13.5 6L20.4 6.8L19.4 13L14.5 11Z" fill="#e24a3b"/><path d="M12.6 8.6L17.2 15.4H8Z" fill="#2e9e3a"/></svg>
<span style="left:256px;top:1138.96px;font-size:18px;line-height:18px;color:#b4b4b4;letter-spacing:0.284px;font-weight:700;">[text 4]</span>
<div style="left:795.8px;top:1136.8px;width:511.4px;height:22.6px;background:#1c1c1c;"></div>
<span style="left:806px;top:1139.86px;font-size:18px;line-height:18px;color:#d8d8d8;letter-spacing:0.855px;-webkit-text-stroke:0.3px;">Multiply</span>
<svg style="left:1286.4px;top:1144.8px;" width="12.8" height="7.2" viewBox="0 0 12.8 7.2"><path d="M1 1L6.4 6.2L11.8 1" stroke="#d0d0d0" stroke-width="1.7" fill="none" stroke-linecap="round" stroke-linejoin="round"/></svg>
<div style="left:1315.6px;top:1136.6px;width:21.2px;height:21.6px;background:#1f1f1f;"></div>
<svg style="left:1344.9px;top:1137.9px;" width="20" height="19" viewBox="0 0 21 20"><path d="M10 7.6A2.75 2.75 0 0 0 10 13.1A5.5 5.5 0 0 0 9.8 2.1A8.05 8.05 0 0 0 10.2 18.2A10.1 10.1 0 0 0 18.9 2.8" stroke="#bcbcbc" stroke-width="1.6" fill="none" stroke-linecap="round"/></svg>
<div style="left:1372px;top:1136.8px;width:511px;height:22.6px;background:#1c1c1c;"></div>
<span style="left:1382px;top:1139.86px;font-size:18px;line-height:18px;color:#d8d8d8;letter-spacing:0.282px;-webkit-text-stroke:0.3px;">No Matte</span>
<svg style="left:1861.4px;top:1144.8px;" width="12.8" height="7.2" viewBox="0 0 12.8 7.2"><path d="M1 1L6.4 6.2L11.8 1" stroke="#d0d0d0" stroke-width="1.7" fill="none" stroke-linecap="round" stroke-linejoin="round"/></svg>
<div style="left:1944.2px;top:1136.6px;width:21.5px;height:21.6px;background:#1f1f1f;"></div>
<div style="left:1969px;top:1136.6px;width:21.5px;height:21.6px;background:#1f1f1f;"></div>
<div style="left:1994px;top:1136.6px;width:21.5px;height:21.6px;background:#1f1f1f;"></div>
<div style="left:2019px;top:1136.6px;width:21.5px;height:21.6px;background:#1f1f1f;"></div>
<div style="left:2069px;top:1136.6px;width:21.5px;height:21.6px;background:#1f1f1f;"></div>
<div style="left:2093.6px;top:1136.6px;width:21.5px;height:21.6px;background:#1f1f1f;"></div>
<div style="left:2118.4px;top:1136.6px;width:21.5px;height:21.6px;background:#1f1f1f;"></div>
<svg style="left:1944.8px;top:1138.4px;" width="21" height="19" viewBox="0 0 21 19"><path d="M2.8 11C2.8 4.6 6 1 10.5 1C15 1 18.2 4.6 18.2 11Z" fill="#c2c2c2"/><rect x="8.9" y="10" width="3.3" height="7.4" rx="1.6" fill="#c2c2c2"/><circle cx="7.5" cy="6.8" r="1.9" fill="#1f1f1f"/><circle cx="13.6" cy="6.8" r="1.9" fill="#1f1f1f"/><rect x="0.4" y="13" width="6.8" height="2" fill="#c2c2c2"/><rect x="13.8" y="13" width="6.8" height="2" fill="#c2c2c2"/></svg>
<svg style="left:1995px;top:1137px;" width="20" height="20" viewBox="0 0 20 20"><path d="M2 18L18 2" stroke="#c2c2c2" stroke-width="2.6" fill="none" stroke-linecap="round"/></svg>
<span style="left:2020.5px;top:1134.40px;font-size:21.5px;line-height:21.5px;color:#c2c2c2;font-style:italic;font-family:'Liberation Serif',serif;">f</span>
<span style="left:2026.7px;top:1136.67px;font-size:20.0px;line-height:20.0px;color:#c2c2c2;font-style:italic;">x</span>
<svg style="left:2170.4px;top:1137.9px;" width="20" height="19" viewBox="0 0 21 20"><path d="M10 7.6A2.75 2.75 0 0 0 10 13.1A5.5 5.5 0 0 0 9.8 2.1A8.05 8.05 0 0 0 10.2 18.2A10.1 10.1 0 0 0 18.9 2.8" stroke="#bcbcbc" stroke-width="1.6" fill="none" stroke-linecap="round"/></svg>
<div style="left:2203px;top:1136.8px;width:254px;height:22.6px;background:#1c1c1c;"></div>
<span style="left:2213.5px;top:1139.86px;font-size:18px;line-height:18px;color:#d8d8d8;letter-spacing:-0.011px;-webkit-text-stroke:0.3px;">None</span>
<svg style="left:2436.4px;top:1144.8px;" width="12.8" height="7.2" viewBox="0 0 12.8 7.2"><path d="M1 1L6.4 6.2L11.8 1" stroke="#d0d0d0" stroke-width="1.7" fill="none" stroke-linecap="round" stroke-linejoin="round"/></svg>
<div style="left:0px;top:1163.2px;width:2474px;height:26.5px;background:#2f2f2f;"></div>
<div style="left:0px;top:1189.7px;width:2474px;height:1.9px;background:#222222;"></div>
<div style="left:6.8px;top:1164.8px;width:21.4px;height:21.6px;background:#1f1f1f;"></div>
<svg style="left:8.8px;top:1168.7px;" width="18" height="13" viewBox="0 0 18 13"><path d="M0.5 6.5C3 2.2 6 0.6 9 0.6C12 0.6 15 2.2 17.5 6.5C15 10.8 12 12.4 9 12.4C6 12.4 3 10.8 0.5 6.5Z" fill="#c2c2c2"/><circle cx="9" cy="6.3" r="3.9" fill="#1f1f1f"/><circle cx="9" cy="6.3" r="2" fill="#c2c2c2"/></svg>
<div style="left:56.4px;top:1164.8px;width:21.6px;height:21.6px;background:#1f1f1f;"></div>
<div style="left:81.2px;top:1164.8px;width:21.8px;height:21.6px;background:#1f1f1f;"></div>
<svg style="left:121.7px;top:1170.1px;" width="8" height="14" viewBox="0 0 8 14"><path d="M1 1L7 7L1 13" stroke="#b8b8b8" stroke-width="1.7" fill="none" stroke-linecap="round" stroke-linejoin="round"/></svg>
<div style="left:141px;top:1166.4px;width:20px;height:20.2px;background:#ad9e80;"></div>
<span style="left:176.5px;top:1167.56px;font-size:18px;line-height:18px;color:#b4b4b4;font-weight:700;">4</span>
<svg style="left:222px;top:1166.2px;" width="27" height="21" viewBox="0 0 27 21"><rect x="0" y="0" width="27" height="21" fill="#c0c0c0"/><rect x="0" y="0" width="27" height="1.3" fill="#4a4a4a"/><rect x="4" y="1.5" width="19" height="16.5" fill="#c0c0c0"/><rect x="0.8" y="2" width="2.2" height="2" fill="#3a3a3a"/><rect x="24" y="2" width="2.2" height="2" fill="#3a3a3a"/><rect x="0.8" y="5.8" width="2.2" height="2" fill="#3a3a3a"/><rect x="24" y="5.8" width="2.2" height="2" fill="#3a3a3a"/><rect x="0.8" y="9.6" width="2.2" height="2" fill="#3a3a3a"/><rect x="24" y="9.6" width="2.2" height="2" fill="#3a3a3a"/><rect x="0.8" y="13.4" width="2.2" height="2" fill="#3a3a3a"/><rect x="24" y="13.4" width="2.2" height="2" fill="#3a3a3a"/><rect x="0.8" y="17.2" width="2.2" height="2" fill="#3a3a3a"/><rect x="24" y="17.2" width="2.2" height="2" fill="#3a3a3a"/><rect x="3.6" y="1.3" width="0.8" height="19.7" fill="#555"/><rect x="22.6" y="1.3" width="0.8" height="19.7" fill="#555"/><rect x="4.4" y="17.6" width="18.2" height="1.2" fill="#555"/><circle cx="10.3" cy="6.8" r="3" fill="#3b82e6"/><path d="M13.5 6L20.4 6.8L19.4 13L14.5 11Z" fill="#e24a3b"/><path d="M12.6 8.6L17.2 15.4H8Z" fill="#2e9e3a"/></svg>
<span style="left:256px;top:1167.16px;font-size:18px;line-height:18px;color:#b4b4b4;letter-spacing:0.284px;font-weight:700;">[text 4]</span>
<div style="left:795.8px;top:1165px;width:511.4px;height:22.6px;background:#1c1c1c;"></div>
<span style="left:806px;top:1168.06px;font-size:18px;line-height:18px;color:#d8d8d8;letter-spacing:0.855px;-webkit-text-stroke:0.3px;">Multiply</span>
<svg style="left:1286.4px;top:1173px;" width="12.8" height="7.2" viewBox="0 0 12.8 7.2"><path d="M1 1L6.4 6.2L11.8 1" stroke="#d0d0d0" stroke-width="1.7" fill="none" stroke-linecap="round" stroke-linejoin="round"/></svg>
<div style="left:1315.6px;top:1164.8px;width:21.2px;height:21.6px;background:#1f1f1f;"></div>
<svg style="left:1344.9px;top:1166.1px;" width="20" height="19" viewBox="0 0 21 20"><path d="M10 7.6A2.75 2.75 0 0 0 10 13.1A5.5 5.5 0 0 0 9.8 2.1A8.05 8.05 0 0 0 10.2 18.2A10.1 10.1 0 0 0 18.9 2.8" stroke="#bcbcbc" stroke-width="1.6" fill="none" stroke-linecap="round"/></svg>
<div style="left:1372px;top:1165px;width:511px;height:22.6px;background:#1c1c1c;"></div>
<span style="left:1382px;top:1168.06px;font-size:18px;line-height:18px;color:#d8d8d8;letter-spacing:0.282px;-webkit-text-stroke:0.3px;">No Matte</span>
<svg style="left:1861.4px;top:1173px;" width="12.8" height="7.2" viewBox="0 0 12.8 7.2"><path d="M1 1L6.4 6.2L11.8 1" stroke="#d0d0d0" stroke-width="1.7" fill="none" stroke-linecap="round" stroke-linejoin="round"/></svg>
<div style="left:1944.2px;top:1164.8px;width:21.5px;height:21.6px;background:#1f1f1f;"></div>
<div style="left:1969px;top:1164.8px;width:21.5px;height:21.6px;background:#1f1f1f;"></div>
<div style="left:1994px;top:1164.8px;width:21.5px;height:21.6px;background:#1f1f1f;"></div>
<div style="left:2019px;top:1164.8px;width:21.5px;height:21.6px;background:#1f1f1f;"></div>
<div style="left:2069px;top:1164.8px;width:21.5px;height:21.6px;background:#1f1f1f;"></div>
<div style="left:2093.6px;top:1164.8px;width:21.5px;height:21.6px;background:#1f1f1f;"></div>
<div style="left:2118.4px;top:1164.8px;width:21.5px;height:21.6px;background:#1f1f1f;"></div>
<svg style="left:1944.8px;top:1166.6px;" width="21" height="19" viewBox="0 0 21 19"><path d="M2.8 11C2.8 4.6 6 1 10.5 1C15 1 18.2 4.6 18.2 11Z" fill="#c2c2c2"/><rect x="8.9" y="10" width="3.3" height="7.4" rx="1.6" fill="#c2c2c2"/><circle cx="7.5" cy="6.8" r="1.9" fill="#1f1f1f"/><circle cx="13.6" cy="6.8" r="1.9" fill="#1f1f1f"/><rect x="0.4" y="13" width="6.8" height="2" fill="#c2c2c2"/><rect x="13.8" y="13" width="6.8" height="2" fill="#c2c2c2"/></svg>
<svg style="left:1995px;top:1165.2px;" width="20" height="20" viewBox="0 0 20 20"><path d="M2 18L18 2" stroke="#c2c2c2" stroke-width="2.6" fill="none" stroke-linecap="round"/></svg>
<span style="left:2020.5px;top:1162.60px;font-size:21.5px;line-height:21.5px;color:#c2c2c2;font-style:italic;font-family:'Liberation Serif',serif;">f</span>
<span style="left:2026.7px;top:1164.87px;font-size:20.0px;line-height:20.0px;color:#c2c2c2;font-style:italic;">x</span>
<svg style="left:2170.4px;top:1166.1px;" width="20" height="19" viewBox="0 0 21 20"><path d="M10 7.6A2.75 2.75 0 0 0 10 13.1A5.5 5.5 0 0 0 9.8 2.1A8.05 8.05 0 0 0 10.2 18.2A10.1 10.1 0 0 0 18.9 2.8" stroke="#bcbcbc" stroke-width="1.6" fill="none" stroke-linecap="round"/></svg>
<div style="left:2203px;top:1165px;width:254px;height:22.6px;background:#1c1c1c;"></div>
<span style="left:2213.5px;top:1168.06px;font-size:18px;line-height:18px;color:#d8d8d8;letter-spacing:-0.011px;-webkit-text-stroke:0.3px;">None</span>
<svg style="left:2436.4px;top:1173px;" width="12.8" height="7.2" viewBox="0 0 12.8 7.2"><path d="M1 1L6.4 6.2L11.8 1" stroke="#d0d0d0" stroke-width="1.7" fill="none" stroke-linecap="round" stroke-linejoin="round"/></svg>
<div style="left:0px;top:1191.4px;width:2474px;height:26.5px;background:#2f2f2f;"></div>
<div style="left:0px;top:1217.9px;width:2474px;height:1.9px;background:#222222;"></div>
<div style="left:6.8px;top:1193px;width:21.4px;height:21.6px;background:#1f1f1f;"></div>
<svg style="left:8.8px;top:1196.9px;" width="18" height="13" viewBox="0 0 18 13"><path d="M0.5 6.5C3 2.2 6 0.6 9 0.6C12 0.6 15 2.2 17.5 6.5C15 10.8 12 12.4 9 12.4C6 12.4 3 10.8 0.5 6.5Z" fill="#c2c2c2"/><circle cx="9" cy="6.3" r="3.9" fill="#1f1f1f"/><circle cx="9" cy="6.3" r="2" fill="#c2c2c2"/></svg>
<div style="left:56.4px;top:1193px;width:21.6px;height:21.6px;background:#1f1f1f;"></div>
<div style="left:81.2px;top:1193px;width:21.8px;height:21.6px;background:#1f1f1f;"></div>
<svg style="left:121.7px;top:1198.3px;" width="8" height="14" viewBox="0 0 8 14"><path d="M1 1L7 7L1 13" stroke="#b8b8b8" stroke-width="1.7" fill="none" stroke-linecap="round" stroke-linejoin="round"/></svg>
<div style="left:141px;top:1194.6px;width:20px;height:20.2px;background:#ad9e80;"></div>
<span style="left:176.5px;top:1195.76px;font-size:18px;line-height:18px;color:#b4b4b4;font-weight:700;">5</span>
<svg style="left:222px;top:1194.4px;" width="27" height="21" viewBox="0 0 27 21"><rect x="0" y="0" width="27" height="21" fill="#c0c0c0"/><rect x="0" y="0" width="27" height="1.3" fill="#4a4a4a"/><rect x="4" y="1.5" width="19" height="16.5" fill="#c0c0c0"/><rect x="0.8" y="2" width="2.2" height="2" fill="#3a3a3a"/><rect x="24" y="2" width="2.2" height="2" fill="#3a3a3a"/><rect x="0.8" y="5.8" width="2.2" height="2" fill="#3a3a3a"/><rect x="24" y="5.8" width="2.2" height="2" fill="#3a3a3a"/><rect x="0.8" y="9.6" width="2.2" height="2" fill="#3a3a3a"/><rect x="24" y="9.6" width="2.2" height="2" fill="#3a3a3a"/><rect x="0.8" y="13.4" width="2.2" height="2" fill="#3a3a3a"/><rect x="24" y="13.4" width="2.2" height="2" fill="#3a3a3a"/><rect x="0.8" y="17.2" width="2.2" height="2" fill="#3a3a3a"/><rect x="24" y="17.2" width="2.2" height="2" fill="#3a3a3a"/><rect x="3.6" y="1.3" width="0.8" height="19.7" fill="#555"/><rect x="22.6" y="1.3" width="0.8" height="19.7" fill="#555"/><rect x="4.4" y="17.6" width="18.2" height="1.2" fill="#555"/><circle cx="10.3" cy="6.8" r="3" fill="#3b82e6"/><path d="M13.5 6L20.4 6.8L19.4 13L14.5 11Z" fill="#e24a3b"/><path d="M12.6 8.6L17.2 15.4H8Z" fill="#2e9e3a"/></svg>
<span style="left:256px;top:1195.36px;font-size:18px;line-height:18px;color:#b4b4b4;letter-spacing:0.284px;font-weight:700;">[text 4]</span>
<div style="left:795.8px;top:1193.2px;width:511.4px;height:22.6px;background:#1c1c1c;"></div>
<span style="left:806px;top:1196.26px;font-size:18px;line-height:18px;color:#d8d8d8;letter-spacing:0.855px;-webkit-text-stroke:0.3px;">Multiply</span>
<svg style="left:1286.4px;top:1201.2px;" width="12.8" height="7.2" viewBox="0 0 12.8 7.2"><path d="M1 1L6.4 6.2L11.8 1" stroke="#d0d0d0" stroke-width="1.7" fill="none" stroke-linecap="round" stroke-linejoin="round"/></svg>
<div style="left:1315.6px;top:1193px;width:21.2px;height:21.6px;background:#1f1f1f;"></div>
<svg style="left:1344.9px;top:1194.3px;" width="20" height="19" viewBox="0 0 21 20"><path d="M10 7.6A2.75 2.75 0 0 0 10 13.1A5.5 5.5 0 0 0 9.8 2.1A8.05 8.05 0 0 0 10.2 18.2A10.1 10.1 0 0 0 18.9 2.8" stroke="#bcbcbc" stroke-width="1.6" fill="none" stroke-linecap="round"/></svg>
<div style="left:1372px;top:1193.2px;width:511px;height:22.6px;background:#1c1c1c;"></div>
<span style="left:1382px;top:1196.26px;font-size:18px;line-height:18px;color:#d8d8d8;letter-spacing:0.282px;-webkit-text-stroke:0.3px;">No Matte</span>
<svg style="left:1861.4px;top:1201.2px;" width="12.8" height="7.2" viewBox="0 0 12.8 7.2"><path d="M1 1L6.4 6.2L11.8 1" stroke="#d0d0d0" stroke-width="1.7" fill="none" stroke-linecap="round" stroke-linejoin="round"/></svg>
<div style="left:1944.2px;top:1193px;width:21.5px;height:21.6px;background:#1f1f1f;"></div>
<div style="left:1969px;top:1193px;width:21.5px;height:21.6px;background:#1f1f1f;"></div>
<div style="left:1994px;top:1193px;width:21.5px;height:21.6px;background:#1f1f1f;"></div>
<div style="left:2019px;top:1193px;width:21.5px;height:21.6px;background:#1f1f1f;"></div>
<div style="left:2069px;top:1193px;width:21.5px;height:21.6px;background:#1f1f1f;"></div>
<div style="left:2093.6px;top:1193px;width:21.5px;height:21.6px;background:#1f1f1f;"></div>
<div style="left:2118.4px;top:1193px;width:21.5px;height:21.6px;background:#1f1f1f;"></div>
<svg style="left:1944.8px;top:1194.8px;" width="21" height="19" viewBox="0 0 21 19"><path d="M2.8 11C2.8 4.6 6 1 10.5 1C15 1 18.2 4.6 18.2 11Z" fill="#c2c2c2"/><rect x="8.9" y="10" width="3.3" height="7.4" rx="1.6" fill="#c2c2c2"/><circle cx="7.5" cy="6.8" r="1.9" fill="#1f1f1f"/><circle cx="13.6" cy="6.8" r="1.9" fill="#1f1f1f"/><rect x="0.4" y="13" width="6.8" height="2" fill="#c2c2c2"/><rect x="13.8" y="13" width="6.8" height="2" fill="#c2c2c2"/></svg>
<svg style="left:1995px;top:1193.4px;" width="20" height="20" viewBox="0 0 20 20"><path d="M2 18L18 2" stroke="#c2c2c2" stroke-width="2.6" fill="none" stroke-linecap="round"/></svg>
<span style="left:2020.5px;top:1190.80px;font-size:21.5px;line-height:21.5px;color:#c2c2c2;font-style:italic;font-family:'Liberation Serif',serif;">f</span>
<span style="left:2026.7px;top:1193.07px;font-size:20.0px;line-height:20.0px;color:#c2c2c2;font-style:italic;">x</span>
<svg style="left:2170.4px;top:1194.3px;" width="20" height="19" viewBox="0 0 21 20"><path d="M10 7.6A2.75 2.75 0 0 0 10 13.1A5.5 5.5 0 0 0 9.8 2.1A8.05 8.05 0 0 0 10.2 18.2A10.1 10.1 0 0 0 18.9 2.8" stroke="#bcbcbc" stroke-width="1.6" fill="none" stroke-linecap="round"/></svg>
<div style="left:2203px;top:1193.2px;width:254px;height:22.6px;background:#1c1c1c;"></div>
<span style="left:2213.5px;top:1196.26px;font-size:18px;line-height:18px;color:#d8d8d8;letter-spacing:-0.011px;-webkit-text-stroke:0.3px;">None</span>
<svg style="left:2436.4px;top:1201.2px;" width="12.8" height="7.2" viewBox="0 0 12.8 7.2"><path d="M1 1L6.4 6.2L11.8 1" stroke="#d0d0d0" stroke-width="1.7" fill="none" stroke-linecap="round" stroke-linejoin="round"/></svg>
<div style="left:0px;top:1219.6px;width:2474px;height:26.5px;background:#2f2f2f;"></div>
<div style="left:0px;top:1246.1px;width:2474px;height:1.9px;background:#222222;"></div>
<div style="left:6.8px;top:1221.2px;width:21.4px;height:21.6px;background:#1f1f1f;"></div>
<svg style="left:8.8px;top:1225.1px;" width="18" height="13" viewBox="0 0 18 13"><path d="M0.5 6.5C3 2.2 6 0.6 9 0.6C12 0.6 15 2.2 17.5 6.5C15 10.8 12 12.4 9 12.4C6 12.4 3 10.8 0.5 6.5Z" fill="#c2c2c2"/><circle cx="9" cy="6.3" r="3.9" fill="#1f1f1f"/><circle cx="9" cy="6.3" r="2" fill="#c2c2c2"/></svg>
<div style="left:56.4px;top:1221.2px;width:21.6px;height:21.6px;background:#1f1f1f;"></div>
<div style="left:81.2px;top:1221.2px;width:21.8px;height:21.6px;background:#1f1f1f;"></div>
<svg style="left:121.7px;top:1226.5px;" width="8" height="14" viewBox="0 0 8 14"><path d="M1 1L7 7L1 13" stroke="#b8b8b8" stroke-width="1.7" fill="none" stroke-linecap="round" stroke-linejoin="round"/></svg>
<div style="left:141px;top:1222.8px;width:20px;height:20.2px;background:#ad9e80;"></div>
<span style="left:176.5px;top:1223.96px;font-size:18px;line-height:18px;color:#b4b4b4;font-weight:700;">6</span>
<svg style="left:222px;top:1222.6px;" width="27" height="21" viewBox="0 0 27 21"><rect x="0" y="0" width="27" height="21" fill="#c0c0c0"/><rect x="0" y="0" width="27" height="1.3" fill="#4a4a4a"/><rect x="4" y="1.5" width="19" height="16.5" fill="#c0c0c0"/><rect x="0.8" y="2" width="2.2" height="2" fill="#3a3a3a"/><rect x="24" y="2" width="2.2" height="2" fill="#3a3a3a"/><rect x="0.8" y="5.8" width="2.2" height="2" fill="#3a3a3a"/><rect x="24" y="5.8" width="2.2" height="2" fill="#3a3a3a"/><rect x="0.8" y="9.6" width="2.2" height="2" fill="#3a3a3a"/><rect x="24" y="9.6" width="2.2" height="2" fill="#3a3a3a"/><rect x="0.8" y="13.4" width="2.2" height="2" fill="#3a3a3a"/><rect x="24" y="13.4" width="2.2" height="2" fill="#3a3a3a"/><rect x="0.8" y="17.2" width="2.2" height="2" fill="#3a3a3a"/><rect x="24" y="17.2" width="2.2" height="2" fill="#3a3a3a"/><rect x="3.6" y="1.3" width="0.8" height="19.7" fill="#555"/><rect x="22.6" y="1.3" width="0.8" height="19.7" fill="#555"/><rect x="4.4" y="17.6" width="18.2" height="1.2" fill="#555"/><circle cx="10.3" cy="6.8" r="3" fill="#3b82e6"/><path d="M13.5 6L20.4 6.8L19.4 13L14.5 11Z" fill="#e24a3b"/><path d="M12.6 8.6L17.2 15.4H8Z" fill="#2e9e3a"/></svg>
<span style="left:256px;top:1223.56px;font-size:18px;line-height:18px;color:#b4b4b4;letter-spacing:0.284px;font-weight:700;">[text 4]</span>
<div style="left:795.8px;top:1221.4px;width:511.4px;height:22.6px;background:#1c1c1c;"></div>
<span style="left:806px;top:1224.46px;font-size:18px;line-height:18px;color:#d8d8d8;letter-spacing:0.855px;-webkit-text-stroke:0.3px;">Multiply</span>
<svg style="left:1286.4px;top:1229.4px;" width="12.8" height="7.2" viewBox="0 0 12.8 7.2"><path d="M1 1L6.4 6.2L11.8 1" stroke="#d0d0d0" stroke-width="1.7" fill="none" stroke-linecap="round" stroke-linejoin="round"/></svg>
<div style="left:1315.6px;top:1221.2px;width:21.2px;height:21.6px;background:#1f1f1f;"></div>
<svg style="left:1344.9px;top:1222.5px;" width="20" height="19" viewBox="0 0 21 20"><path d="M10 7.6A2.75 2.75 0 0 0 10 13.1A5.5 5.5 0 0 0 9.8 2.1A8.05 8.05 0 0 0 10.2 18.2A10.1 10.1 0 0 0 18.9 2.8" stroke="#bcbcbc" stroke-width="1.6" fill="none" stroke-linecap="round"/></svg>
<div style="left:1372px;top:1221.4px;width:511px;height:22.6px;background:#1c1c1c;"></div>
<span style="left:1382px;top:1224.46px;font-size:18px;line-height:18px;color:#d8d8d8;letter-spacing:0.282px;-webkit-text-stroke:0.3px;">No Matte</span>
<svg style="left:1861.4px;top:1229.4px;" width="12.8" height="7.2" viewBox="0 0 12.8 7.2"><path d="M1 1L6.4 6.2L11.8 1" stroke="#d0d0d0" stroke-width="1.7" fill="none" stroke-linecap="round" stroke-linejoin="round"/></svg>
<div style="left:1944.2px;top:1221.2px;width:21.5px;height:21.6px;background:#1f1f1f;"></div>
<div style="left:1969px;top:1221.2px;width:21.5px;height:21.6px;background:#1f1f1f;"></div>
<div style="left:1994px;top:1221.2px;width:21.5px;height:21.6px;background:#1f1f1f;"></div>
<div style="left:2019px;top:1221.2px;width:21.5px;height:21.6px;background:#1f1f1f;"></div>
<div style="left:2069px;top:1221.2px;width:21.5px;height:21.6px;background:#1f1f1f;"></div>
<div style="left:2093.6px;top:1221.2px;width:21.5px;height:21.6px;background:#1f1f1f;"></div>
<div style="left:2118.4px;top:1221.2px;width:21.5px;height:21.6px;background:#1f1f1f;"></div>
<svg style="left:1944.8px;top:1223px;" width="21" height="19" viewBox="0 0 21 19"><path d="M2.8 11C2.8 4.6 6 1 10.5 1C15 1 18.2 4.6 18.2 11Z" fill="#c2c2c2"/><rect x="8.9" y="10" width="3.3" height="7.4" rx="1.6" fill="#c2c2c2"/><circle cx="7.5" cy="6.8" r="1.9" fill="#1f1f1f"/><circle cx="13.6" cy="6.8" r="1.9" fill="#1f1f1f"/><rect x="0.4" y="13" width="6.8" height="2" fill="#c2c2c2"/><rect x="13.8" y="13" width="6.8" height="2" fill="#c2c2c2"/></svg>
<svg style="left:1995px;top:1221.6px;" width="20" height="20" viewBox="0 0 20 20"><path d="M2 18L18 2" stroke="#c2c2c2" stroke-width="2.6" fill="none" stroke-linecap="round"/></svg>
<span style="left:2020.5px;top:1219.00px;font-size:21.5px;line-height:21.5px;color:#c2c2c2;font-style:italic;font-family:'Liberation Serif',serif;">f</span>
<span style="left:2026.7px;top:1221.27px;font-size:20.0px;line-height:20.0px;color:#c2c2c2;font-style:italic;">x</span>
<svg style="left:2170.4px;top:1222.5px;" width="20" height="19" viewBox="0 0 21 20"><path d="M10 7.6A2.75 2.75 0 0 0 10 13.1A5.5 5.5 0 0 0 9.8 2.1A8.05 8.05 0 0 0 10.2 18.2A10.1 10.1 0 0 0 18.9 2.8" stroke="#bcbcbc" stroke-width="1.6" fill="none" stroke-linecap="round"/></svg>
<div style="left:2203px;top:1221.4px;width:254px;height:22.6px;background:#1c1c1c;"></div>
<span style="left:2213.5px;top:1224.46px;font-size:18px;line-height:18px;color:#d8d8d8;letter-spacing:-0.011px;-webkit-text-stroke:0.3px;">None</span>
<svg style="left:2436.4px;top:1229.4px;" width="12.8" height="7.2" viewBox="0 0 12.8 7.2"><path d="M1 1L6.4 6.2L11.8 1" stroke="#d0d0d0" stroke-width="1.7" fill="none" stroke-linecap="round" stroke-linejoin="round"/></svg>
<div style="left:0px;top:1247.8px;width:2474px;height:26.5px;background:#2f2f2f;"></div>
<div style="left:0px;top:1274.3px;width:2474px;height:1.9px;background:#222222;"></div>
<div style="left:6.8px;top:1249.4px;width:21.4px;height:21.6px;background:#1f1f1f;"></div>
<svg style="left:8.8px;top:1253.3px;" width="18" height="13" viewBox="0 0 18 13"><path d="M0.5 6.5C3 2.2 6 0.6 9 0.6C12 0.6 15 2.2 17.5 6.5C15 10.8 12 12.4 9 12.4C6 12.4 3 10.8 0.5 6.5Z" fill="#c2c2c2"/><circle cx="9" cy="6.3" r="3.9" fill="#1f1f1f"/><circle cx="9" cy="6.3" r="2" fill="#c2c2c2"/></svg>
<div style="left:56.4px;top:1249.4px;width:21.6px;height:21.6px;background:#1f1f1f;"></div>
<div style="left:81.2px;top:1249.4px;width:21.8px;height:21.6px;background:#1f1f1f;"></div>
<svg style="left:121.7px;top:1254.7px;" width="8" height="14" viewBox="0 0 8 14"><path d="M1 1L7 7L1 13" stroke="#b8b8b8" stroke-width="1.7" fill="none" stroke-linecap="round" stroke-linejoin="round"/></svg>
<div style="left:141px;top:1251px;width:20px;height:20.2px;background:#ad9e80;"></div>
<span style="left:176.5px;top:1252.16px;font-size:18px;line-height:18px;color:#b4b4b4;font-weight:700;">7</span>
<svg style="left:222px;top:1250.8px;" width="27" height="21" viewBox="0 0 27 21"><rect x="0" y="0" width="27" height="21" fill="#c0c0c0"/><rect x="0" y="0" width="27" height="1.3" fill="#4a4a4a"/><rect x="4" y="1.5" width="19" height="16.5" fill="#c0c0c0"/><rect x="0.8" y="2" width="2.2" height="2" fill="#3a3a3a"/><rect x="24" y="2" width="2.2" height="2" fill="#3a3a3a"/><rect x="0.8" y="5.8" width="2.2" height="2" fill="#3a3a3a"/><rect x="24" y="5.8" width="2.2" height="2" fill="#3a3a3a"/><rect x="0.8" y="9.6" width="2.2" height="2" fill="#3a3a3a"/><rect x="24" y="9.6" width="2.2" height="2" fill="#3a3a3a"/><rect x="0.8" y="13.4" width="2.2" height="2" fill="#3a3a3a"/><rect x="24" y="13.4" width="2.2" height="2" fill="#3a3a3a"/><rect x="0.8" y="17.2" width="2.2" height="2" fill="#3a3a3a"/><rect x="24" y="17.2" width="2.2" height="2" fill="#3a3a3a"/><rect x="3.6" y="1.3" width="0.8" height="19.7" fill="#555"/><rect x="22.6" y="1.3" width="0.8" height="19.7" fill="#555"/><rect x="4.4" y="17.6" width="18.2" height="1.2" fill="#555"/><circle cx="10.3" cy="6.8" r="3" fill="#3b82e6"/><path d="M13.5 6L20.4 6.8L19.4 13L14.5 11Z" fill="#e24a3b"/><path d="M12.6 8.6L17.2 15.4H8Z" fill="#2e9e3a"/></svg>
<span style="left:256px;top:1251.76px;font-size:18px;line-height:18px;color:#b4b4b4;letter-spacing:0.284px;font-weight:700;">[text 4]</span>
<div style="left:795.8px;top:1249.6px;width:511.4px;height:22.6px;background:#1c1c1c;"></div>
<span style="left:806px;top:1252.66px;font-size:18px;line-height:18px;color:#d8d8d8;letter-spacing:0.855px;-webkit-text-stroke:0.3px;">Multiply</span>
<svg style="left:1286.4px;top:1257.6px;" width="12.8" height="7.2" viewBox="0 0 12.8 7.2"><path d="M1 1L6.4 6.2L11.8 1" stroke="#d0d0d0" stroke-width="1.7" fill="none" stroke-linecap="round" stroke-linejoin="round"/></svg>
<div style="left:1315.6px;top:1249.4px;width:21.2px;height:21.6px;background:#1f1f1f;"></div>
<svg style="left:1344.9px;top:1250.7px;" width="20" height="19" viewBox="0 0 21 20"><path d="M10 7.6A2.75 2.75 0 0 0 10 13.1A5.5 5.5 0 0 0 9.8 2.1A8.05 8.05 0 0 0 10.2 18.2A10.1 10.1 0 0 0 18.9 2.8" stroke="#bcbcbc" stroke-width="1.6" fill="none" stroke-linecap="round"/></svg>
<div style="left:1372px;top:1249.6px;width:511px;height:22.6px;background:#1c1c1c;"></div>
<span style="left:1382px;top:1252.66px;font-size:18px;line-height:18px;color:#d8d8d8;letter-spacing:0.282px;-webkit-text-stroke:0.3px;">No Matte</span>
<svg style="left:1861.4px;top:1257.6px;" width="12.8" height="7.2" viewBox="0 0 12.8 7.2"><path d="M1 1L6.4 6.2L11.8 1" stroke="#d0d0d0" stroke-width="1.7" fill="none" stroke-linecap="round" stroke-linejoin="round"/></svg>
<div style="left:1944.2px;top:1249.4px;width:21.5px;height:21.6px;background:#1f1f1f;"></div>
<div style="left:1969px;top:1249.4px;width:21.5px;height:21.6px;background:#1f1f1f;"></div>
<div style="left:1994px;top:1249.4px;width:21.5px;height:21.6px;background:#1f1f1f;"></div>
<div style="left:2019px;top:1249.4px;width:21.5px;height:21.6px;background:#1f1f1f;"></div>
<div style="left:2069px;top:1249.4px;width:21.5px;height:21.6px;background:#1f1f1f;"></div>
<div style="left:2093.6px;top:1249.4px;width:21.5px;height:21.6px;background:#1f1f1f;"></div>
<div style="left:2118.4px;top:1249.4px;width:21.5px;height:21.6px;background:#1f1f1f;"></div>
<svg style="left:1944.8px;top:1251.2px;" width="21" height="19" viewBox="0 0 21 19"><path d="M2.8 11C2.8 4.6 6 1 10.5 1C15 1 18.2 4.6 18.2 11Z" fill="#c2c2c2"/><rect x="8.9" y="10" width="3.3" height="7.4" rx="1.6" fill="#c2c2c2"/><circle cx="7.5" cy="6.8" r="1.9" fill="#1f1f1f"/><circle cx="13.6" cy="6.8" r="1.9" fill="#1f1f1f"/><rect x="0.4" y="13" width="6.8" height="2" fill="#c2c2c2"/><rect x="13.8" y="13" width="6.8" height="2" fill="#c2c2c2"/></svg>
<svg style="left:1995px;top:1249.8px;" width="20" height="20" viewBox="0 0 20 20"><path d="M2 18L18 2" stroke="#c2c2c2" stroke-width="2.6" fill="none" stroke-linecap="round"/></svg>
<span style="left:2020.5px;top:1247.20px;font-size:21.5px;line-height:21.5px;color:#c2c2c2;font-style:italic;font-family:'Liberation Serif',serif;">f</span>
<span style="left:2026.7px;top:1249.47px;font-size:20.0px;line-height:20.0px;color:#c2c2c2;font-style:italic;">x</span>
<svg style="left:2170.4px;top:1250.7px;" width="20" height="19" viewBox="0 0 21 20"><path d="M10 7.6A2.75 2.75 0 0 0 10 13.1A5.5 5.5 0 0 0 9.8 2.1A8.05 8.05 0 0 0 10.2 18.2A10.1 10.1 0 0 0 18.9 2.8" stroke="#bcbcbc" stroke-width="1.6" fill="none" stroke-linecap="round"/></svg>
<div style="left:2203px;top:1249.6px;width:254px;height:22.6px;background:#1c1c1c;"></div>
<span style="left:2213.5px;top:1252.66px;font-size:18px;line-height:18px;color:#d8d8d8;letter-spacing:-0.011px;-webkit-text-stroke:0.3px;">None</span>
<svg style="left:2436.4px;top:1257.6px;" width="12.8" height="7.2" viewBox="0 0 12.8 7.2"><path d="M1 1L6.4 6.2L11.8 1" stroke="#d0d0d0" stroke-width="1.7" fill="none" stroke-linecap="round" stroke-linejoin="round"/></svg>
<div style="left:0px;top:1276px;width:2474px;height:26.5px;background:#2f2f2f;"></div>
<div style="left:0px;top:1302.5px;width:2474px;height:1.9px;background:#222222;"></div>
<div style="left:6.8px;top:1277.6px;width:21.4px;height:21.6px;background:#1f1f1f;"></div>
<div style="left:81.2px;top:1277.6px;width:21.8px;height:21.6px;background:#1f1f1f;"></div>
<svg style="left:121.7px;top:1282.9px;" width="8" height="14" viewBox="0 0 8 14"><path d="M1 1L7 7L1 13" stroke="#b8b8b8" stroke-width="1.7" fill="none" stroke-linecap="round" stroke-linejoin="round"/></svg>
<div style="left:141px;top:1279.2px;width:20px;height:20.2px;background:#ad9e80;"></div>
<span style="left:176.5px;top:1280.36px;font-size:18px;line-height:18px;color:#b4b4b4;font-weight:700;">8</span>
<svg style="left:222px;top:1279px;" width="27" height="21" viewBox="0 0 27 21"><rect x="0" y="0" width="27" height="21" fill="#c0c0c0"/><rect x="0" y="0" width="27" height="1.3" fill="#4a4a4a"/><rect x="4" y="1.5" width="19" height="16.5" fill="#c0c0c0"/><rect x="0.8" y="2" width="2.2" height="2" fill="#3a3a3a"/><rect x="24" y="2" width="2.2" height="2" fill="#3a3a3a"/><rect x="0.8" y="5.8" width="2.2" height="2" fill="#3a3a3a"/><rect x="24" y="5.8" width="2.2" height="2" fill="#3a3a3a"/><rect x="0.8" y="9.6" width="2.2" height="2" fill="#3a3a3a"/><rect x="24" y="9.6" width="2.2" height="2" fill="#3a3a3a"/><rect x="0.8" y="13.4" width="2.2" height="2" fill="#3a3a3a"/><rect x="24" y="13.4" width="2.2" height="2" fill="#3a3a3a"/><rect x="0.8" y="17.2" width="2.2" height="2" fill="#3a3a3a"/><rect x="24" y="17.2" width="2.2" height="2" fill="#3a3a3a"/><rect x="3.6" y="1.3" width="0.8" height="19.7" fill="#555"/><rect x="22.6" y="1.3" width="0.8" height="19.7" fill="#555"/><rect x="4.4" y="17.6" width="18.2" height="1.2" fill="#555"/><circle cx="10.3" cy="6.8" r="3" fill="#3b82e6"/><path d="M13.5 6L20.4 6.8L19.4 13L14.5 11Z" fill="#e24a3b"/><path d="M12.6 8.6L17.2 15.4H8Z" fill="#2e9e3a"/></svg>
<span style="left:256px;top:1279.96px;font-size:18px;line-height:18px;color:#b4b4b4;letter-spacing:-0.225px;font-weight:700;">[displace]</span>
<div style="left:795.8px;top:1277.8px;width:511.4px;height:22.6px;background:#1c1c1c;"></div>
<span style="left:806px;top:1280.86px;font-size:18px;line-height:18px;color:#d8d8d8;letter-spacing:0.598px;-webkit-text-stroke:0.3px;">Normal</span>
<svg style="left:1286.4px;top:1285.8px;" width="12.8" height="7.2" viewBox="0 0 12.8 7.2"><path d="M1 1L6.4 6.2L11.8 1" stroke="#d0d0d0" stroke-width="1.7" fill="none" stroke-linecap="round" stroke-linejoin="round"/></svg>
<div style="left:1315.6px;top:1277.6px;width:21.2px;height:21.6px;background:#1f1f1f;"></div>
<svg style="left:1344.9px;top:1278.9px;" width="20" height="19" viewBox="0 0 21 20"><path d="M10 7.6A2.75 2.75 0 0 0 10 13.1A5.5 5.5 0 0 0 9.8 2.1A8.05 8.05 0 0 0 10.2 18.2A10.1 10.1 0 0 0 18.9 2.8" stroke="#bcbcbc" stroke-width="1.6" fill="none" stroke-linecap="round"/></svg>
<div style="left:1372px;top:1277.8px;width:511px;height:22.6px;background:#1c1c1c;"></div>
<span style="left:1382px;top:1280.86px;font-size:18px;line-height:18px;color:#d8d8d8;letter-spacing:0.282px;-webkit-text-stroke:0.3px;">No Matte</span>
<svg style="left:1861.4px;top:1285.8px;" width="12.8" height="7.2" viewBox="0 0 12.8 7.2"><path d="M1 1L6.4 6.2L11.8 1" stroke="#d0d0d0" stroke-width="1.7" fill="none" stroke-linecap="round" stroke-linejoin="round"/></svg>
<div style="left:1944.2px;top:1277.6px;width:21.5px;height:21.6px;background:#1f1f1f;"></div>
<div style="left:1969px;top:1277.6px;width:21.5px;height:21.6px;background:#1f1f1f;"></div>
<div style="left:1994px;top:1277.6px;width:21.5px;height:21.6px;background:#1f1f1f;"></div>
<div style="left:2069px;top:1277.6px;width:21.5px;height:21.6px;background:#1f1f1f;"></div>
<div style="left:2093.6px;top:1277.6px;width:21.5px;height:21.6px;background:#1f1f1f;"></div>
<div style="left:2118.4px;top:1277.6px;width:21.5px;height:21.6px;background:#1f1f1f;"></div>
<svg style="left:1944.8px;top:1279.4px;" width="21" height="19" viewBox="0 0 21 19"><path d="M2.8 11C2.8 4.6 6 1 10.5 1C15 1 18.2 4.6 18.2 11Z" fill="#c2c2c2"/><rect x="8.9" y="10" width="3.3" height="7.4" rx="1.6" fill="#c2c2c2"/><circle cx="7.5" cy="6.8" r="1.9" fill="#1f1f1f"/><circle cx="13.6" cy="6.8" r="1.9" fill="#1f1f1f"/><rect x="0.4" y="13" width="6.8" height="2" fill="#c2c2c2"/><rect x="13.8" y="13" width="6.8" height="2" fill="#c2c2c2"/></svg>
<svg style="left:1995px;top:1278px;" width="20" height="20" viewBox="0 0 20 20"><path d="M2 18L18 2" stroke="#c2c2c2" stroke-width="2.6" fill="none" stroke-linecap="round"/></svg>
<svg style="left:2170.4px;top:1278.9px;" width="20" height="19" viewBox="0 0 21 20"><path d="M10 7.6A2.75 2.75 0 0 0 10 13.1A5.5 5.5 0 0 0 9.8 2.1A8.05 8.05 0 0 0 10.2 18.2A10.1 10.1 0 0 0 18.9 2.8" stroke="#bcbcbc" stroke-width="1.6" fill="none" stroke-linecap="round"/></svg>
<div style="left:2203px;top:1277.8px;width:254px;height:22.6px;background:#1c1c1c;"></div>
<span style="left:2213.5px;top:1280.86px;font-size:18px;line-height:18px;color:#d8d8d8;letter-spacing:-0.011px;-webkit-text-stroke:0.3px;">None</span>
<svg style="left:2436.4px;top:1285.8px;" width="12.8" height="7.2" viewBox="0 0 12.8 7.2"><path d="M1 1L6.4 6.2L11.8 1" stroke="#d0d0d0" stroke-width="1.7" fill="none" stroke-linecap="round" stroke-linejoin="round"/></svg>
<div style="left:0px;top:1304.2px;width:2474px;height:26.5px;background:#2f2f2f;"></div>
<div style="left:0px;top:1330.7px;width:2474px;height:1.9px;background:#222222;"></div>
<div style="left:6.8px;top:1305.8px;width:21.4px;height:21.6px;background:#1f1f1f;"></div>
<svg style="left:8.8px;top:1309.7px;" width="18" height="13" viewBox="0 0 18 13"><path d="M0.5 6.5C3 2.2 6 0.6 9 0.6C12 0.6 15 2.2 17.5 6.5C15 10.8 12 12.4 9 12.4C6 12.4 3 10.8 0.5 6.5Z" fill="#c2c2c2"/><circle cx="9" cy="6.3" r="3.9" fill="#1f1f1f"/><circle cx="9" cy="6.3" r="2" fill="#c2c2c2"/></svg>
<div style="left:56.4px;top:1305.8px;width:21.6px;height:21.6px;background:#1f1f1f;"></div>
<div style="left:81.2px;top:1305.8px;width:21.8px;height:21.6px;background:#1f1f1f;"></div>
<svg style="left:121.7px;top:1311.1px;" width="8" height="14" viewBox="0 0 8 14"><path d="M1 1L7 7L1 13" stroke="#b8b8b8" stroke-width="1.7" fill="none" stroke-linecap="round" stroke-linejoin="round"/></svg>
<div style="left:141px;top:1307.4px;width:20px;height:20.2px;background:#a9a5cf;"></div>
<span style="left:176.5px;top:1308.56px;font-size:18px;line-height:18px;color:#b4b4b4;font-weight:700;">9</span>
<svg style="left:226.5px;top:1307px;" width="18" height="21" viewBox="0 0 18 21"><path d="M1 0.5H11.5L16.5 5.5V20.5H1Z" fill="#e8e8e8" stroke="#bbb" stroke-width="0.6"/><path d="M11.5 0.5V5.5H16.5Z" fill="#b0b0b0"/><rect x="4.5" y="6.5" width="8" height="2.2" fill="#7aa0d8"/><rect x="4" y="9.6" width="9.5" height="3" fill="#333"/><rect x="6" y="13" width="6" height="2.4" fill="#999"/></svg>
<span style="left:256px;top:1308.16px;font-size:18px;line-height:18px;color:#b4b4b4;letter-spacing:0.054px;font-weight:700;">[TexturesCom_Rock_CliffVolcanic3_2K_albedo4.tif]</span>
<div style="left:795.8px;top:1306px;width:511.4px;height:22.6px;background:#1c1c1c;"></div>
<span style="left:806px;top:1309.06px;font-size:18px;line-height:18px;color:#d8d8d8;letter-spacing:0.598px;-webkit-text-stroke:0.3px;">Normal</span>
<svg style="left:1286.4px;top:1314px;" width="12.8" height="7.2" viewBox="0 0 12.8 7.2"><path d="M1 1L6.4 6.2L11.8 1" stroke="#d0d0d0" stroke-width="1.7" fill="none" stroke-linecap="round" stroke-linejoin="round"/></svg>
<div style="left:1315.6px;top:1305.8px;width:21.2px;height:21.6px;background:#1f1f1f;"></div>
<svg style="left:1344.9px;top:1307.1px;" width="20" height="19" viewBox="0 0 21 20"><path d="M10 7.6A2.75 2.75 0 0 0 10 13.1A5.5 5.5 0 0 0 9.8 2.1A8.05 8.05 0 0 0 10.2 18.2A10.1 10.1 0 0 0 18.9 2.8" stroke="#bcbcbc" stroke-width="1.6" fill="none" stroke-linecap="round"/></svg>
<div style="left:1372px;top:1306px;width:511px;height:22.6px;background:#1c1c1c;"></div>
<span style="left:1382px;top:1309.06px;font-size:18px;line-height:18px;color:#d8d8d8;letter-spacing:0.282px;-webkit-text-stroke:0.3px;">No Matte</span>
<svg style="left:1861.4px;top:1314px;" width="12.8" height="7.2" viewBox="0 0 12.8 7.2"><path d="M1 1L6.4 6.2L11.8 1" stroke="#d0d0d0" stroke-width="1.7" fill="none" stroke-linecap="round" stroke-linejoin="round"/></svg>
<div style="left:1944.2px;top:1305.8px;width:21.5px;height:21.6px;background:#1f1f1f;"></div>
<div style="left:1994px;top:1305.8px;width:21.5px;height:21.6px;background:#1f1f1f;"></div>
<div style="left:2069px;top:1305.8px;width:21.5px;height:21.6px;background:#1f1f1f;"></div>
<div style="left:2093.6px;top:1305.8px;width:21.5px;height:21.6px;background:#1f1f1f;"></div>
<div style="left:2118.4px;top:1305.8px;width:21.5px;height:21.6px;background:#1f1f1f;"></div>
<svg style="left:1944.8px;top:1307.6px;" width="21" height="19" viewBox="0 0 21 19"><path d="M2.8 11C2.8 4.6 6 1 10.5 1C15 1 18.2 4.6 18.2 11Z" fill="#c2c2c2"/><rect x="8.9" y="10" width="3.3" height="7.4" rx="1.6" fill="#c2c2c2"/><circle cx="7.5" cy="6.8" r="1.9" fill="#1f1f1f"/><circle cx="13.6" cy="6.8" r="1.9" fill="#1f1f1f"/><rect x="0.4" y="13" width="6.8" height="2" fill="#c2c2c2"/><rect x="13.8" y="13" width="6.8" height="2" fill="#c2c2c2"/></svg>
<svg style="left:1995px;top:1306.2px;" width="20" height="20" viewBox="0 0 20 20"><path d="M2 18L18 2" stroke="#c2c2c2" stroke-width="2.6" fill="none" stroke-linecap="round"/></svg>
<svg style="left:2170.4px;top:1307.1px;" width="20" height="19" viewBox="0 0 21 20"><path d="M10 7.6A2.75 2.75 0 0 0 10 13.1A5.5 5.5 0 0 0 9.8 2.1A8.05 8.05 0 0 0 10.2 18.2A10.1 10.1 0 0 0 18.9 2.8" stroke="#bcbcbc" stroke-width="1.6" fill="none" stroke-linecap="round"/></svg>
<div style="left:2203px;top:1306px;width:254px;height:22.6px;background:#1c1c1c;"></div>
<span style="left:2213.5px;top:1309.06px;font-size:18px;line-height:18px;color:#d8d8d8;letter-spacing:-0.011px;-webkit-text-stroke:0.3px;">None</span>
<svg style="left:2436.4px;top:1314px;" width="12.8" height="7.2" viewBox="0 0 12.8 7.2"><path d="M1 1L6.4 6.2L11.8 1" stroke="#d0d0d0" stroke-width="1.7" fill="none" stroke-linecap="round" stroke-linejoin="round"/></svg>
<div style="left:2474px;top:1078.8px;width:26px;height:26.4px;background:#2b2b2b;"></div>
<svg style="left:2475px;top:1081px;" width="24" height="23" viewBox="0 0 24 23"><rect x="11" y="7" width="12" height="11" fill="#c2c2c2"/><path d="M1.5 15.6L11 3V15.6Z" stroke="#c2c2c2" stroke-width="1.6" fill="#2b2b2b"/><circle cx="11.5" cy="17" r="4.2" stroke="#c2c2c2" stroke-width="1.6" fill="#2b2b2b"/></svg>
<div style="left:0px;top:1394.6px;width:2474px;height:1.7px;background:#000;"></div>
<div style="left:0px;top:1396.3px;width:2500px;height:25.7px;background:#262626;"></div>
<div style="left:2473.4px;top:1396.3px;width:1.4px;height:25.7px;background:#141414;"></div>
<div style="left:7px;top:1397.5px;width:26px;height:24.5px;background:#1c1c1c;border-radius:2px;"></div>
<svg style="left:11.5px;top:1401.5px;" width="19" height="19" viewBox="0 0 19 19"><path d="M1 1H12V4.4M1 1V12H4.4" stroke="#3f8ae6" stroke-width="1.7" fill="none"/><rect x="5.6" y="5.6" width="12.4" height="12.4" stroke="#3f8ae6" stroke-width="1.7" fill="none"/><rect x="9.8" y="9.8" width="4" height="4" fill="#3f8ae6"/></svg>
<div style="left:39px;top:1397.5px;width:26px;height:24.5px;background:#1c1c1c;border-radius:2px;"></div>
<svg style="left:42.5px;top:1400.5px;" width="20" height="20" viewBox="0 0 20 20"><circle cx="7.4" cy="7.4" r="6.4" stroke="#3f8ae6" stroke-width="1.7" fill="none"/><rect x="8" y="8" width="11" height="11" stroke="#3f8ae6" stroke-width="1.7" fill="none"/></svg>
<svg style="left:73px;top:1400.5px;" width="21" height="20" viewBox="0 0 21 20"><path d="M7 1C5 1 4.4 2 4.4 4V7C4.4 8.6 3.4 9.6 1 10C3.4 10.4 4.4 11.4 4.4 13V16C4.4 18 5 19 7 19M14 1C16 1 16.6 2 16.6 4V7C16.6 8.6 17.6 9.6 20 10C17.6 10.4 16.6 11.4 16.6 13V16C16.6 18 16 19 14 19" stroke="#b8b8b8" stroke-width="2.2" fill="none"/><rect x="7.4" y="2" width="6.2" height="16" fill="#5a5a5a"/></svg>
<svg style="left:105px;top:1401.5px;" width="22" height="18" viewBox="0 0 22 18"><path d="M1 16.4C1 9 4 4.6 9 4.6C13.6 4.6 15.4 8 14.8 11.6C14.4 14 13 16.4 11 16.4Z" fill="#b8b8b8"/><path d="M14.6 11L17 5.4M15.6 12L20 7" stroke="#b8b8b8" stroke-width="1.5" fill="none"/><circle cx="17.2" cy="4.6" r="1.7" fill="#b8b8b8"/><circle cx="20.4" cy="6.2" r="1.5" fill="#b8b8b8"/></svg>
<span style="left:173px;top:1401.16px;font-size:18px;line-height:18px;color:#a0a0a0;letter-spacing:-0.097px;-webkit-text-stroke:0.3px;">Frame Render Time</span>
<span style="left:341px;top:1401.16px;font-size:18px;line-height:18px;color:#d2bc84;letter-spacing:-0.012px;font-weight:700;">193ms</span>
</div></body></html>
